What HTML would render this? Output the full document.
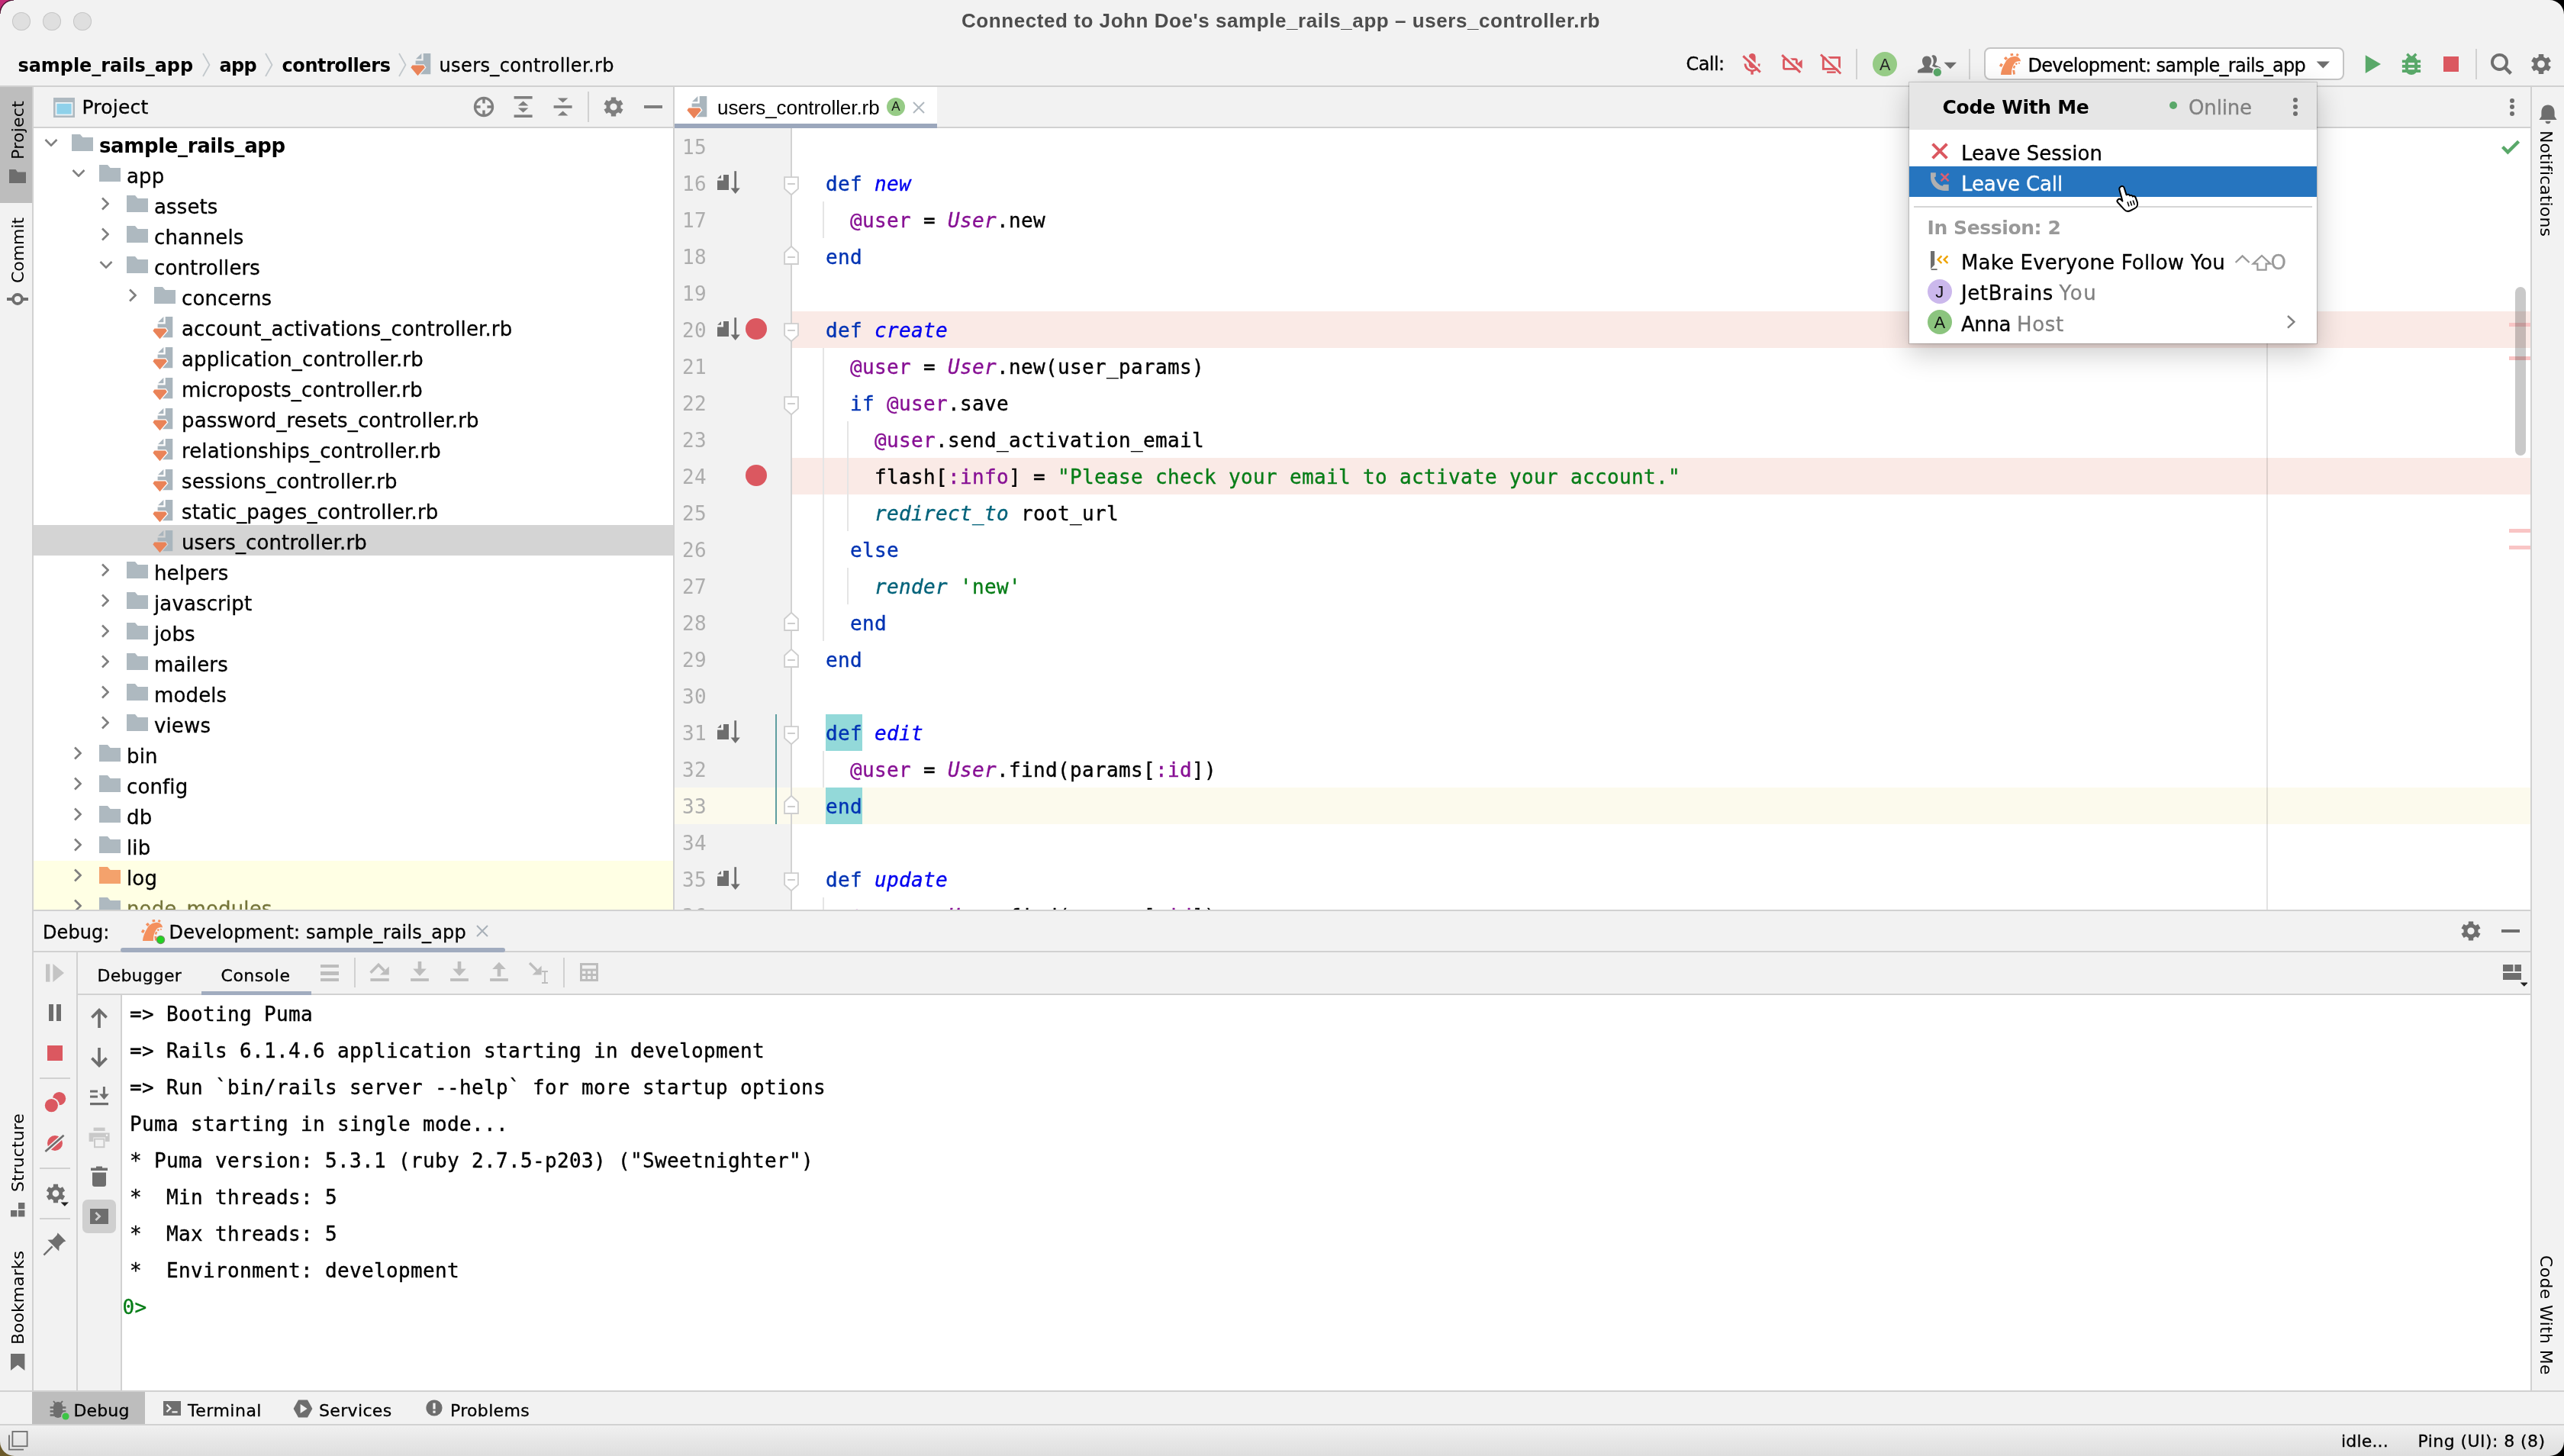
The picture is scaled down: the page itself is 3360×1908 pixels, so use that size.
<!DOCTYPE html>
<html><head><meta charset="utf-8"><title>users_controller.rb</title><style>
html,body{margin:0;padding:0;}
body{will-change:transform;width:3360px;height:1908px;position:relative;background:#f2f2f2;}
body div, body svg{position:absolute;}
.t{white-space:pre;}
.t span{position:static;}
</style></head><body>
<div style="left:0px;top:0px;width:3360px;height:112px;background:#f2f2f2;"></div>
<div style="left:0px;top:112px;width:3360px;height:2px;background:#d1d1d1;"></div>
<div style="left:0px;top:114px;width:42px;height:1710px;background:#f2f2f2;"></div>
<div style="left:42px;top:114px;width:2px;height:1708px;background:#d1d1d1;"></div>
<div style="left:3318px;top:114px;width:42px;height:1710px;background:#f2f2f2;"></div>
<div style="left:3316px;top:114px;width:2px;height:1708px;background:#d1d1d1;"></div>
<div style="left:44px;top:114px;width:838px;height:52px;background:#f2f2f2;"></div>
<div style="left:44px;top:166px;width:838px;height:2px;background:#d1d1d1;"></div>
<div style="left:44px;top:168px;width:838px;height:1024px;background:#fff;"></div>
<div style="left:882px;top:114px;width:2px;height:1078px;background:#d1d1d1;"></div>
<div style="left:884px;top:114px;width:2432px;height:52px;background:#f2f2f2;"></div>
<div style="left:884px;top:166px;width:2432px;height:2px;background:#d1d1d1;"></div>
<div style="left:884px;top:168px;width:152px;height:1024px;background:#f2f2f2;"></div>
<div style="left:1038px;top:168px;width:2278px;height:1024px;background:#fff;"></div>
<div style="left:44px;top:1192px;width:3272px;height:2px;background:#d1d1d1;"></div>
<div style="left:44px;top:1194px;width:3272px;height:52px;background:#f2f2f2;"></div>
<div style="left:44px;top:1246px;width:3272px;height:2px;background:#d1d1d1;"></div>
<div style="left:44px;top:1248px;width:56px;height:574px;background:#f2f2f2;"></div>
<div style="left:100px;top:1248px;width:2px;height:574px;background:#d1d1d1;"></div>
<div style="left:102px;top:1248px;width:3214px;height:54px;background:#f2f2f2;"></div>
<div style="left:102px;top:1302px;width:3214px;height:2px;background:#d1d1d1;"></div>
<div style="left:102px;top:1304px;width:56px;height:518px;background:#f2f2f2;"></div>
<div style="left:158px;top:1304px;width:2px;height:518px;background:#d1d1d1;"></div>
<div style="left:160px;top:1304px;width:3156px;height:518px;background:#fff;"></div>
<div style="left:0px;top:1822px;width:3360px;height:2px;background:#d1d1d1;"></div>
<div style="left:0px;top:1824px;width:3360px;height:42px;background:#f2f2f2;"></div>
<div style="left:0px;top:1866px;width:3360px;height:2px;background:#d1d1d1;"></div>
<div style="left:0px;top:1868px;width:3360px;height:40px;background:linear-gradient(#f0f0f0,#dedede);"></div>
<div style="left:16px;top:16px;width:24px;height:24px;border-radius:50%;background:#dfdfdf;box-shadow:inset 0 0 0 1px #c6c6c6;"></div>
<div style="left:56px;top:16px;width:24px;height:24px;border-radius:50%;background:#dfdfdf;box-shadow:inset 0 0 0 1px #c6c6c6;"></div>
<div style="left:96px;top:16px;width:24px;height:24px;border-radius:50%;background:#dfdfdf;box-shadow:inset 0 0 0 1px #c6c6c6;"></div>
<svg style="left:0;top:0" width="20" height="20"><path d="M0,0 H18 A18,18 0 0 0 0,18Z" fill="#c22a76"/><path d="M18,0 A18,18 0 0 0 0,18" fill="none" stroke="#4a0f2e" stroke-width="1.4"/></svg>
<svg style="left:3339px;top:0" width="21" height="21"><path d="M21,0 H2 A19,19 0 0 1 21,19Z" fill="#000"/></svg>
<svg style="left:0;top:1887px" width="21" height="21"><path d="M0,21 H19 A19,19 0 0 1 0,2Z" fill="#6b5a2a"/></svg>
<svg style="left:3339px;top:1887px" width="21" height="21"><path d="M21,21 H2 A19,19 0 0 0 21,2Z" fill="#000"/></svg>
<div class="t" style="left:1260px;top:8.99px;line-height:36px;font-size:26px;font-family:'Liberation Sans', sans-serif;color:#4d4d4d;font-weight:700;letter-spacing:0.56px;">Connected to John Doe's sample_rails_app – users_controller.rb</div>
<div class="t" style="left:23.5px;top:68.70px;line-height:34px;font-size:24px;font-family:'DejaVu Sans', 'Liberation Sans', sans-serif;color:#000;font-weight:700;letter-spacing:-0.06px;">sample_rails_app</div>
<div class="t" style="left:287.5px;top:68.70px;line-height:34px;font-size:24px;font-family:'DejaVu Sans', 'Liberation Sans', sans-serif;color:#000;font-weight:700;letter-spacing:-0.69px;">app</div>
<div class="t" style="left:369.5px;top:68.70px;line-height:34px;font-size:24px;font-family:'DejaVu Sans', 'Liberation Sans', sans-serif;color:#000;font-weight:700;letter-spacing:-0.40px;">controllers</div>
<div class="t" style="left:575.5px;top:68.70px;line-height:34px;font-size:24px;font-family:'DejaVu Sans', 'Liberation Sans', sans-serif;color:#000;-webkit-text-stroke:0.3px;letter-spacing:0.40px;">users_controller.rb</div>
<svg style="left:264.5px;top:69px;" width="12" height="32" viewBox="0 0 12 32"><path d="M1,1 L9.5,16 L1,31" fill="none" stroke="#c2c8cc" stroke-width="1.8"/></svg>
<svg style="left:347px;top:69px;" width="12" height="32" viewBox="0 0 12 32"><path d="M1,1 L9.5,16 L1,31" fill="none" stroke="#c2c8cc" stroke-width="1.8"/></svg>
<svg style="left:521.5px;top:69px;" width="12" height="32" viewBox="0 0 12 32"><path d="M1,1 L9.5,16 L1,31" fill="none" stroke="#c2c8cc" stroke-width="1.8"/></svg>
<svg style="left:538px;top:70px;" width="27" height="31" viewBox="0 0 27 31"><path d="M16.7,0 H26.3 V27.3 H6.6 V9.6 H16.7Z" fill="#a9b5bd"/><path d="M14.4,0 V7.3 H7Z" fill="#a9b5bd"/><path d="M2.4,15.6 H16.9 L18.9,18.5 L9.5,29.2 L0.4,18.5Z" fill="#ea8358" stroke="#f2f2f2" stroke-width="2.6" paint-order="stroke"/></svg>
<div class="t" style="left:2209.5px;top:66.70px;line-height:34px;font-size:24px;font-family:'DejaVu Sans', 'Liberation Sans', sans-serif;color:#000;-webkit-text-stroke:0.3px;letter-spacing:-0.58px;">Call:</div>
<svg style="left:2280px;top:68px;" width="32" height="32" viewBox="0 0 32 32"><rect x="11.8" y="2" width="8.8" height="19.4" rx="4.4" fill="#db5860"/><path d="M6.9,15.600 a9.200,9.200 0 0 0 18.400,0" fill="none" stroke="#db5860" stroke-width="2.8"/><path d="M16.05,24.200 V29.700" stroke="#db5860" stroke-width="3.4"/><path d="M6.5,3.2 L29.0,24.400000000000002" stroke="#f2f2f2" stroke-width="2.8"/><path d="M4.3,5.4 L26.8,26.6" stroke="#db5860" stroke-width="3.0"/></svg>
<svg style="left:2332px;top:68px;" width="32" height="32" viewBox="0 0 32 32"><rect x="5.5" y="9.6" width="16.9" height="12.8" rx="1.6" fill="none" stroke="#db5860" stroke-width="2.8"/><path d="M22.6,16 L29.700,10.100 V21.900Z" fill="#db5860"/><path d="M5.4,2.0 L29.4,24.7" stroke="#f2f2f2" stroke-width="2.8"/><path d="M3.2,4.2 L27.2,26.9" stroke="#db5860" stroke-width="3.0"/></svg>
<svg style="left:2384px;top:68px;" width="32" height="32" viewBox="0 0 32 32"><rect x="5.3" y="7.4" width="21.2" height="15" fill="none" stroke="#db5860" stroke-width="2.8"/><rect x="10.1" y="25.4" width="11.6" height="2.5" fill="#db5860"/><path d="M4.2,1.2999999999999998 L30.4,26.3" stroke="#f2f2f2" stroke-width="2.8"/><path d="M2,3.5 L28.2,28.5" stroke="#db5860" stroke-width="3.0"/></svg>
<div style="left:2432px;top:64px;width:2px;height:40px;background:#d1d1d1;"></div>
<div style="left:2454px;top:68px;width:32px;height:32px;border-radius:50%;background:#96cb86;"></div>
<div class="t" style="left:2463.1px;top:69.55px;line-height:30px;font-size:21.5px;font-family:'Liberation Sans', sans-serif;color:#262626;">A</div>
<svg style="left:2512px;top:70px;" width="36" height="32" viewBox="0 0 36 32"><path d="M13,3.5 c4.2,0 6,3 6,6.6 c0,2.6 -1,4.8 -2.4,6.2 v1.6 l6.4,3 c1.4,0.7 2,1.8 2,3.2 v1.4 H1 v-1.4 c0,-1.4 0.6,-2.5 2,-3.2 l6.4,-3 v-1.6 c-1.4,-1.4 -2.4,-3.6 -2.4,-6.2 c0,-3.6 1.8,-6.6 6,-6.6Z" fill="#6e6e6e"/><path d="M20.5,2 c4,0 5.6,2.8 5.6,6 c0,2.4 -0.9,4.4 -2.2,5.7 v1.3 l5.8,2.8 c1.2,0.6 1.8,1.6 1.8,2.9 v1.3 h-4.5 c-0.3,-1.6 -1.3,-2.7 -2.8,-3.4 l-4.4,-2 c1.3,-1.8 2,-4 2,-6.6 c0,-2.6 -0.8,-5 -2.6,-6.6 c0.5,-0.5 0.9,-0.7 1.3,-0.7Z" fill="#6e6e6e"/><circle cx="26.8" cy="24.7" r="6.6" fill="#f2f2f2"/><circle cx="26.8" cy="24.7" r="5.2" fill="#59a869"/></svg>
<svg style="left:2547px;top:81px;" width="18" height="10" viewBox="0 0 18 10"><path d="M0.5,0.8 H17 L8.75,9.2Z" fill="#6e6e6e"/></svg>
<div style="left:2580px;top:64px;width:2px;height:40px;background:#d1d1d1;"></div>
<div style="left:2600px;top:62px;width:468px;height:39px;background:#fff;border:2px solid #c4c4c4;border-radius:8px;"></div>
<svg style="left:2619px;top:70px;" width="30" height="29" viewBox="0 0 30 29"><g fill="#f4905e"><path d="M3,28.1 C3.4,22 5.4,17.5 10.2,9.2 C13,5.6 17,3.9 21.9,3.7 C25,3.8 27.5,6 28.8,8.7 V10.6 C27,10 24.5,10.3 22.6,11.3 C20.5,12.8 18.5,16.5 17.4,20.9 C17,23.500 16.9,26 16.9,28.1Z"/><rect x="1.70" y="13.30" width="3.4" height="4.2" transform="rotate(30 3.4 15.4)"/><rect x="7.70" y="4.60" width="3.6" height="3.8" transform="rotate(50 9.5 6.5)"/><rect x="15.60" y="0.10" width="3.6" height="3" transform="rotate(-12 17.4 1.6)"/><rect x="23.20" y="0.40" width="3" height="3" transform="rotate(25 24.7 1.9)"/><rect x="26.00" y="11.90" width="1.8" height="1.8" transform="rotate(20 26.9 12.8)"/><rect x="22.10" y="12.50" width="2.4" height="2.4" transform="rotate(35 23.3 13.7)"/><rect x="19.30" y="16.00" width="2.4" height="3.6" transform="rotate(20 20.5 17.8)"/><rect x="18.70" y="21.90" width="2.8" height="5.6" transform="rotate(-8 20.1 24.7)"/></g></svg>
<div class="t" style="left:2657.5px;top:68.70px;line-height:34px;font-size:24px;font-family:'DejaVu Sans', 'Liberation Sans', sans-serif;color:#000;-webkit-text-stroke:0.3px;letter-spacing:-0.71px;">Development: sample_rails_app</div>
<svg style="left:3035px;top:80px;" width="19" height="10" viewBox="0 0 19 10"><path d="M0.6,0.5 H18 L9.3,9.6Z" fill="#6e6e6e"/></svg>
<svg style="left:3098px;top:70px;" width="24" height="28" viewBox="0 0 24 28"><path d="M1.8,2.2 L22,14 L1.8,26Z" fill="#59a869"/></svg>
<svg style="left:3146px;top:68px;" width="28" height="32" viewBox="0 0 28 32"><g fill="#59a869"><path d="M6,13.5 a8,8 0 0 1 16,0 V22 a8,8 0 0 1 -16,0Z"/><rect x="1.9" y="10.6" width="24.2" height="3.6"/><rect x="1.9" y="16.9" width="24.2" height="3.9"/><rect x="1.9" y="23.2" width="24.2" height="3.8"/></g><path d="M8.3,2.700 L13.700,8.200 M20.300,2.700 L14.800,8.200" stroke="#59a869" stroke-width="3.4"/><rect x="9.9" y="14.2" width="8.2" height="2.7" fill="#f2f2f2"/><rect x="9.9" y="20.8" width="8.2" height="2.4" fill="#f2f2f2"/></svg>
<div style="left:3202px;top:74px;width:20px;height:20px;background:#db5860;"></div>
<div style="left:3244px;top:64px;width:2px;height:40px;background:#d1d1d1;"></div>
<svg style="left:3260px;top:68px;" width="34" height="32" viewBox="0 0 34 32"><circle cx="15.5" cy="13.4" r="9.6" fill="none" stroke="#6e6e6e" stroke-width="3.8"/><path d="M22.3,20.2 L30.4,28.4" stroke="#6e6e6e" stroke-width="4.4"/></svg>
<svg style="left:3314px;top:68px;" width="32" height="32" viewBox="0 0 32 32"><path d="M12.64,6.79 L12.75,3.00 L19.25,3.00 L19.36,6.79 L22.29,8.49 L25.63,6.69 L28.88,12.31 L25.65,14.31 L25.65,17.69 L28.88,19.69 L25.63,25.31 L22.29,23.51 L19.36,25.21 L19.25,29.00 L12.75,29.00 L12.64,25.21 L9.71,23.51 L6.37,25.31 L3.12,19.69 L6.35,17.69 L6.35,14.31 L3.12,12.31 L6.37,6.69 L9.71,8.49Z M11.20,16.00 a4.8,4.8 0 1,0 9.6,0 a4.8,4.8 0 1,0 -9.6,0Z" fill="#6e6e6e" fill-rule="evenodd"/></svg>
<div style="left:0px;top:114px;width:42px;height:152px;background:#bdbdbd;"></div>
<div class="t" style="left:24px;top:208.5px;transform-origin:0 0;transform:rotate(-90deg) translate(0,-50%);font-size:22px;line-height:28px;font-family:'DejaVu Sans', 'Liberation Sans', sans-serif;color:#000;letter-spacing:0.25px;">Project</div>
<div class="t" style="left:24px;top:371px;transform-origin:0 0;transform:rotate(-90deg) translate(0,-50%);font-size:22px;line-height:28px;font-family:'DejaVu Sans', 'Liberation Sans', sans-serif;color:#000;letter-spacing:-0.07px;">Commit</div>
<div class="t" style="left:24px;top:1562px;transform-origin:0 0;transform:rotate(-90deg) translate(0,-50%);font-size:22px;line-height:28px;font-family:'DejaVu Sans', 'Liberation Sans', sans-serif;color:#000;letter-spacing:0.07px;">Structure</div>
<div class="t" style="left:24px;top:1762px;transform-origin:0 0;transform:rotate(-90deg) translate(0,-50%);font-size:22px;line-height:28px;font-family:'DejaVu Sans', 'Liberation Sans', sans-serif;color:#000;letter-spacing:0.01px;">Bookmarks</div>
<svg style="left:12px;top:222px;" width="22" height="18" viewBox="0 0 22 18"><path d="M0,0 H8.5 L11,3.4 H22 V18 H0Z" fill="#6e6e6e"/></svg>
<svg style="left:9px;top:378px;" width="28" height="28" viewBox="0 0 28 28"><circle cx="14" cy="14" r="6" fill="none" stroke="#6e6e6e" stroke-width="3.8"/><path d="M0,14 H7 M21,14 H28" stroke="#6e6e6e" stroke-width="3.8"/></svg>
<svg style="left:14px;top:1576px;" width="20" height="20" viewBox="0 0 20 20"><rect x="0" y="10" width="8.4" height="8.4" fill="#6e6e6e"/><rect x="10" y="10" width="8.4" height="8.4" fill="#6e6e6e"/><rect x="10" y="0" width="8.4" height="8.4" fill="#6e6e6e"/></svg>
<svg style="left:14px;top:1774px;" width="20" height="24" viewBox="0 0 20 24"><path d="M0,0 H18.4 V22 L9.2,14.8 L0,22Z" fill="#6e6e6e"/></svg>
<svg style="left:70px;top:128px;" width="28" height="26" viewBox="0 0 28 26"><rect x="0" y="0" width="28" height="26" fill="#aeb9c0"/><rect x="2.6" y="6" width="22.8" height="17.4" fill="#eef3f6"/><rect x="4.4" y="7.8" width="19.2" height="13.8" fill="#8fd1ea"/></svg>
<div class="t" style="left:107.5px;top:123.35px;line-height:35px;font-size:25px;font-family:'DejaVu Sans', 'Liberation Sans', sans-serif;color:#000;-webkit-text-stroke:0.3px;letter-spacing:0.21px;">Project</div>
<svg style="left:620px;top:126px;" width="28" height="28" viewBox="0 0 28 28"><circle cx="14" cy="14" r="11.6" fill="none" stroke="#7f7f7f" stroke-width="3.2"/><path d="M14,2 V9.6 M14,18.4 V26 M2,14 H9.6 M18.4,14 H26" stroke="#7f7f7f" stroke-width="3.4"/></svg>
<svg style="left:673px;top:126px;" width="26" height="28" viewBox="0 0 26 28"><rect x="0.6" y="0" width="24" height="3.6" fill="#7f7f7f"/><rect x="0.6" y="24.4" width="24" height="3.6" fill="#7f7f7f"/><path d="M12.6,6.6 L19.4,12.6 H5.8Z M12.6,21.4 L19.4,15.6 H5.8Z" fill="#7f7f7f"/></svg>
<svg style="left:725px;top:126px;" width="26" height="28" viewBox="0 0 26 28"><rect x="0.6" y="12.2" width="24" height="3.6" fill="#7f7f7f"/><path d="M12.6,8.6 L19.4,2.4 H5.8Z M12.6,19.4 L19.4,25.6 H5.8Z" fill="#7f7f7f"/></svg>
<div style="left:770px;top:120px;width:2px;height:40px;background:#d1d1d1;"></div>
<svg style="left:790px;top:126px;" width="28" height="28" viewBox="0 0 28 28"><path d="M10.71,4.98 L10.85,1.39 L17.15,1.39 L17.29,4.98 L20.16,6.64 L23.35,4.96 L26.50,10.42 L23.46,12.34 L23.46,15.66 L26.50,17.58 L23.35,23.04 L20.16,21.36 L17.29,23.02 L17.15,26.61 L10.85,26.61 L10.71,23.02 L7.84,21.36 L4.65,23.04 L1.50,17.58 L4.54,15.66 L4.54,12.34 L1.50,10.42 L4.65,4.96 L7.84,6.64Z M9.40,14.00 a4.6,4.6 0 1,0 9.2,0 a4.6,4.6 0 1,0 -9.2,0Z" fill="#7f7f7f" fill-rule="evenodd"/></svg>
<div style="left:844px;top:138px;width:24px;height:4px;background:#7f7f7f;"></div>
<div style="left:44px;top:168px;width:838px;height:1024px;overflow:hidden;">
<div style="left:0px;top:520px;width:838px;height:40px;background:#d4d4d4;"></div>
<div style="left:0px;top:960px;width:838px;height:80px;background:#ffffe4;"></div>
<svg style="left:14px;top:14px;" width="18" height="10" viewBox="0 0 18 10"><path d="M1.5,1 L9,8.6 L16.5,1" fill="none" stroke="#7f7f7f" stroke-width="2.6"/></svg>
<svg style="left:50px;top:8px;" width="28" height="22" viewBox="0 0 28 22"><path d="M0,0 H11 L14.5,4 H28 V22 H0Z" fill="#aeb9c0"/></svg>
<div class="t" style="left:86px;top:5.00px;line-height:36px;font-size:26px;font-family:'DejaVu Sans', 'Liberation Sans', sans-serif;color:#000;font-weight:700;letter-spacing:-0.37px;">sample_rails_app</div>
<svg style="left:50px;top:54px;" width="18" height="10" viewBox="0 0 18 10"><path d="M1.5,1 L9,8.6 L16.5,1" fill="none" stroke="#7f7f7f" stroke-width="2.6"/></svg>
<svg style="left:86px;top:48px;" width="28" height="22" viewBox="0 0 28 22"><path d="M0,0 H11 L14.5,4 H28 V22 H0Z" fill="#aeb9c0"/></svg>
<div class="t" style="left:122px;top:44.80px;line-height:36px;font-size:26px;font-family:'DejaVu Sans', 'Liberation Sans', sans-serif;color:#000;letter-spacing:0.13px;-webkit-text-stroke:0.3px;">app</div>
<svg style="left:89px;top:90px;" width="10" height="18" viewBox="0 0 10 18"><path d="M1,1.5 L8.6,9 L1,16.5" fill="none" stroke="#7f7f7f" stroke-width="2.6"/></svg>
<svg style="left:122px;top:88px;" width="28" height="22" viewBox="0 0 28 22"><path d="M0,0 H11 L14.5,4 H28 V22 H0Z" fill="#aeb9c0"/></svg>
<div class="t" style="left:158px;top:84.80px;line-height:36px;font-size:26px;font-family:'DejaVu Sans', 'Liberation Sans', sans-serif;color:#000;letter-spacing:0.13px;-webkit-text-stroke:0.3px;">assets</div>
<svg style="left:89px;top:130px;" width="10" height="18" viewBox="0 0 10 18"><path d="M1,1.5 L8.6,9 L1,16.5" fill="none" stroke="#7f7f7f" stroke-width="2.6"/></svg>
<svg style="left:122px;top:128px;" width="28" height="22" viewBox="0 0 28 22"><path d="M0,0 H11 L14.5,4 H28 V22 H0Z" fill="#aeb9c0"/></svg>
<div class="t" style="left:158px;top:124.80px;line-height:36px;font-size:26px;font-family:'DejaVu Sans', 'Liberation Sans', sans-serif;color:#000;letter-spacing:0.13px;-webkit-text-stroke:0.3px;">channels</div>
<svg style="left:86px;top:174px;" width="18" height="10" viewBox="0 0 18 10"><path d="M1.5,1 L9,8.6 L16.5,1" fill="none" stroke="#7f7f7f" stroke-width="2.6"/></svg>
<svg style="left:122px;top:168px;" width="28" height="22" viewBox="0 0 28 22"><path d="M0,0 H11 L14.5,4 H28 V22 H0Z" fill="#aeb9c0"/></svg>
<div class="t" style="left:158px;top:164.80px;line-height:36px;font-size:26px;font-family:'DejaVu Sans', 'Liberation Sans', sans-serif;color:#000;letter-spacing:0.13px;-webkit-text-stroke:0.3px;">controllers</div>
<svg style="left:125px;top:210px;" width="10" height="18" viewBox="0 0 10 18"><path d="M1,1.5 L8.6,9 L1,16.5" fill="none" stroke="#7f7f7f" stroke-width="2.6"/></svg>
<svg style="left:158px;top:208px;" width="28" height="22" viewBox="0 0 28 22"><path d="M0,0 H11 L14.5,4 H28 V22 H0Z" fill="#aeb9c0"/></svg>
<div class="t" style="left:194px;top:204.80px;line-height:36px;font-size:26px;font-family:'DejaVu Sans', 'Liberation Sans', sans-serif;color:#000;letter-spacing:0.13px;-webkit-text-stroke:0.3px;">concerns</div>
<svg style="left:155.5px;top:246.5px;" width="27" height="31" viewBox="0 0 27 31"><path d="M16.7,0 H26.3 V27.3 H6.6 V9.6 H16.7Z" fill="#a9b5bd"/><path d="M14.4,0 V7.3 H7Z" fill="#a9b5bd"/><path d="M2.4,15.6 H16.9 L18.9,18.5 L9.5,29.2 L0.4,18.5Z" fill="#ea8358" stroke="#fff" stroke-width="2.6" paint-order="stroke"/></svg>
<div class="t" style="left:194px;top:244.80px;line-height:36px;font-size:26px;font-family:'DejaVu Sans', 'Liberation Sans', sans-serif;color:#000;letter-spacing:0.13px;-webkit-text-stroke:0.3px;">account_activations_controller.rb</div>
<svg style="left:155.5px;top:286.5px;" width="27" height="31" viewBox="0 0 27 31"><path d="M16.7,0 H26.3 V27.3 H6.6 V9.6 H16.7Z" fill="#a9b5bd"/><path d="M14.4,0 V7.3 H7Z" fill="#a9b5bd"/><path d="M2.4,15.6 H16.9 L18.9,18.5 L9.5,29.2 L0.4,18.5Z" fill="#ea8358" stroke="#fff" stroke-width="2.6" paint-order="stroke"/></svg>
<div class="t" style="left:194px;top:284.80px;line-height:36px;font-size:26px;font-family:'DejaVu Sans', 'Liberation Sans', sans-serif;color:#000;letter-spacing:0.13px;-webkit-text-stroke:0.3px;">application_controller.rb</div>
<svg style="left:155.5px;top:326.5px;" width="27" height="31" viewBox="0 0 27 31"><path d="M16.7,0 H26.3 V27.3 H6.6 V9.6 H16.7Z" fill="#a9b5bd"/><path d="M14.4,0 V7.3 H7Z" fill="#a9b5bd"/><path d="M2.4,15.6 H16.9 L18.9,18.5 L9.5,29.2 L0.4,18.5Z" fill="#ea8358" stroke="#fff" stroke-width="2.6" paint-order="stroke"/></svg>
<div class="t" style="left:194px;top:324.80px;line-height:36px;font-size:26px;font-family:'DejaVu Sans', 'Liberation Sans', sans-serif;color:#000;letter-spacing:0.13px;-webkit-text-stroke:0.3px;">microposts_controller.rb</div>
<svg style="left:155.5px;top:366.5px;" width="27" height="31" viewBox="0 0 27 31"><path d="M16.7,0 H26.3 V27.3 H6.6 V9.6 H16.7Z" fill="#a9b5bd"/><path d="M14.4,0 V7.3 H7Z" fill="#a9b5bd"/><path d="M2.4,15.6 H16.9 L18.9,18.5 L9.5,29.2 L0.4,18.5Z" fill="#ea8358" stroke="#fff" stroke-width="2.6" paint-order="stroke"/></svg>
<div class="t" style="left:194px;top:364.80px;line-height:36px;font-size:26px;font-family:'DejaVu Sans', 'Liberation Sans', sans-serif;color:#000;letter-spacing:0.13px;-webkit-text-stroke:0.3px;">password_resets_controller.rb</div>
<svg style="left:155.5px;top:406.5px;" width="27" height="31" viewBox="0 0 27 31"><path d="M16.7,0 H26.3 V27.3 H6.6 V9.6 H16.7Z" fill="#a9b5bd"/><path d="M14.4,0 V7.3 H7Z" fill="#a9b5bd"/><path d="M2.4,15.6 H16.9 L18.9,18.5 L9.5,29.2 L0.4,18.5Z" fill="#ea8358" stroke="#fff" stroke-width="2.6" paint-order="stroke"/></svg>
<div class="t" style="left:194px;top:404.80px;line-height:36px;font-size:26px;font-family:'DejaVu Sans', 'Liberation Sans', sans-serif;color:#000;letter-spacing:0.13px;-webkit-text-stroke:0.3px;">relationships_controller.rb</div>
<svg style="left:155.5px;top:446.5px;" width="27" height="31" viewBox="0 0 27 31"><path d="M16.7,0 H26.3 V27.3 H6.6 V9.6 H16.7Z" fill="#a9b5bd"/><path d="M14.4,0 V7.3 H7Z" fill="#a9b5bd"/><path d="M2.4,15.6 H16.9 L18.9,18.5 L9.5,29.2 L0.4,18.5Z" fill="#ea8358" stroke="#fff" stroke-width="2.6" paint-order="stroke"/></svg>
<div class="t" style="left:194px;top:444.80px;line-height:36px;font-size:26px;font-family:'DejaVu Sans', 'Liberation Sans', sans-serif;color:#000;letter-spacing:0.13px;-webkit-text-stroke:0.3px;">sessions_controller.rb</div>
<svg style="left:155.5px;top:486.5px;" width="27" height="31" viewBox="0 0 27 31"><path d="M16.7,0 H26.3 V27.3 H6.6 V9.6 H16.7Z" fill="#a9b5bd"/><path d="M14.4,0 V7.3 H7Z" fill="#a9b5bd"/><path d="M2.4,15.6 H16.9 L18.9,18.5 L9.5,29.2 L0.4,18.5Z" fill="#ea8358" stroke="#fff" stroke-width="2.6" paint-order="stroke"/></svg>
<div class="t" style="left:194px;top:484.80px;line-height:36px;font-size:26px;font-family:'DejaVu Sans', 'Liberation Sans', sans-serif;color:#000;letter-spacing:0.13px;-webkit-text-stroke:0.3px;">static_pages_controller.rb</div>
<svg style="left:155.5px;top:526.5px;" width="27" height="31" viewBox="0 0 27 31"><path d="M16.7,0 H26.3 V27.3 H6.6 V9.6 H16.7Z" fill="#a9b5bd"/><path d="M14.4,0 V7.3 H7Z" fill="#a9b5bd"/><path d="M2.4,15.6 H16.9 L18.9,18.5 L9.5,29.2 L0.4,18.5Z" fill="#ea8358" stroke="#d4d4d4" stroke-width="2.6" paint-order="stroke"/></svg>
<div class="t" style="left:194px;top:524.80px;line-height:36px;font-size:26px;font-family:'DejaVu Sans', 'Liberation Sans', sans-serif;color:#000;letter-spacing:0.13px;-webkit-text-stroke:0.3px;">users_controller.rb</div>
<svg style="left:89px;top:570px;" width="10" height="18" viewBox="0 0 10 18"><path d="M1,1.5 L8.6,9 L1,16.5" fill="none" stroke="#7f7f7f" stroke-width="2.6"/></svg>
<svg style="left:122px;top:568px;" width="28" height="22" viewBox="0 0 28 22"><path d="M0,0 H11 L14.5,4 H28 V22 H0Z" fill="#aeb9c0"/></svg>
<div class="t" style="left:158px;top:564.80px;line-height:36px;font-size:26px;font-family:'DejaVu Sans', 'Liberation Sans', sans-serif;color:#000;letter-spacing:0.13px;-webkit-text-stroke:0.3px;">helpers</div>
<svg style="left:89px;top:610px;" width="10" height="18" viewBox="0 0 10 18"><path d="M1,1.5 L8.6,9 L1,16.5" fill="none" stroke="#7f7f7f" stroke-width="2.6"/></svg>
<svg style="left:122px;top:608px;" width="28" height="22" viewBox="0 0 28 22"><path d="M0,0 H11 L14.5,4 H28 V22 H0Z" fill="#aeb9c0"/></svg>
<div class="t" style="left:158px;top:604.80px;line-height:36px;font-size:26px;font-family:'DejaVu Sans', 'Liberation Sans', sans-serif;color:#000;letter-spacing:0.13px;-webkit-text-stroke:0.3px;">javascript</div>
<svg style="left:89px;top:650px;" width="10" height="18" viewBox="0 0 10 18"><path d="M1,1.5 L8.6,9 L1,16.5" fill="none" stroke="#7f7f7f" stroke-width="2.6"/></svg>
<svg style="left:122px;top:648px;" width="28" height="22" viewBox="0 0 28 22"><path d="M0,0 H11 L14.5,4 H28 V22 H0Z" fill="#aeb9c0"/></svg>
<div class="t" style="left:158px;top:644.80px;line-height:36px;font-size:26px;font-family:'DejaVu Sans', 'Liberation Sans', sans-serif;color:#000;letter-spacing:0.13px;-webkit-text-stroke:0.3px;">jobs</div>
<svg style="left:89px;top:690px;" width="10" height="18" viewBox="0 0 10 18"><path d="M1,1.5 L8.6,9 L1,16.5" fill="none" stroke="#7f7f7f" stroke-width="2.6"/></svg>
<svg style="left:122px;top:688px;" width="28" height="22" viewBox="0 0 28 22"><path d="M0,0 H11 L14.5,4 H28 V22 H0Z" fill="#aeb9c0"/></svg>
<div class="t" style="left:158px;top:684.80px;line-height:36px;font-size:26px;font-family:'DejaVu Sans', 'Liberation Sans', sans-serif;color:#000;letter-spacing:0.13px;-webkit-text-stroke:0.3px;">mailers</div>
<svg style="left:89px;top:730px;" width="10" height="18" viewBox="0 0 10 18"><path d="M1,1.5 L8.6,9 L1,16.5" fill="none" stroke="#7f7f7f" stroke-width="2.6"/></svg>
<svg style="left:122px;top:728px;" width="28" height="22" viewBox="0 0 28 22"><path d="M0,0 H11 L14.5,4 H28 V22 H0Z" fill="#aeb9c0"/></svg>
<div class="t" style="left:158px;top:724.80px;line-height:36px;font-size:26px;font-family:'DejaVu Sans', 'Liberation Sans', sans-serif;color:#000;letter-spacing:0.13px;-webkit-text-stroke:0.3px;">models</div>
<svg style="left:89px;top:770px;" width="10" height="18" viewBox="0 0 10 18"><path d="M1,1.5 L8.6,9 L1,16.5" fill="none" stroke="#7f7f7f" stroke-width="2.6"/></svg>
<svg style="left:122px;top:768px;" width="28" height="22" viewBox="0 0 28 22"><path d="M0,0 H11 L14.5,4 H28 V22 H0Z" fill="#aeb9c0"/></svg>
<div class="t" style="left:158px;top:764.80px;line-height:36px;font-size:26px;font-family:'DejaVu Sans', 'Liberation Sans', sans-serif;color:#000;letter-spacing:0.13px;-webkit-text-stroke:0.3px;">views</div>
<svg style="left:53px;top:810px;" width="10" height="18" viewBox="0 0 10 18"><path d="M1,1.5 L8.6,9 L1,16.5" fill="none" stroke="#7f7f7f" stroke-width="2.6"/></svg>
<svg style="left:86px;top:808px;" width="28" height="22" viewBox="0 0 28 22"><path d="M0,0 H11 L14.5,4 H28 V22 H0Z" fill="#aeb9c0"/></svg>
<div class="t" style="left:122px;top:804.80px;line-height:36px;font-size:26px;font-family:'DejaVu Sans', 'Liberation Sans', sans-serif;color:#000;letter-spacing:0.13px;-webkit-text-stroke:0.3px;">bin</div>
<svg style="left:53px;top:850px;" width="10" height="18" viewBox="0 0 10 18"><path d="M1,1.5 L8.6,9 L1,16.5" fill="none" stroke="#7f7f7f" stroke-width="2.6"/></svg>
<svg style="left:86px;top:848px;" width="28" height="22" viewBox="0 0 28 22"><path d="M0,0 H11 L14.5,4 H28 V22 H0Z" fill="#aeb9c0"/></svg>
<div class="t" style="left:122px;top:844.80px;line-height:36px;font-size:26px;font-family:'DejaVu Sans', 'Liberation Sans', sans-serif;color:#000;letter-spacing:0.13px;-webkit-text-stroke:0.3px;">config</div>
<svg style="left:53px;top:890px;" width="10" height="18" viewBox="0 0 10 18"><path d="M1,1.5 L8.6,9 L1,16.5" fill="none" stroke="#7f7f7f" stroke-width="2.6"/></svg>
<svg style="left:86px;top:888px;" width="28" height="22" viewBox="0 0 28 22"><path d="M0,0 H11 L14.5,4 H28 V22 H0Z" fill="#aeb9c0"/></svg>
<div class="t" style="left:122px;top:884.80px;line-height:36px;font-size:26px;font-family:'DejaVu Sans', 'Liberation Sans', sans-serif;color:#000;letter-spacing:0.13px;-webkit-text-stroke:0.3px;">db</div>
<svg style="left:53px;top:930px;" width="10" height="18" viewBox="0 0 10 18"><path d="M1,1.5 L8.6,9 L1,16.5" fill="none" stroke="#7f7f7f" stroke-width="2.6"/></svg>
<svg style="left:86px;top:928px;" width="28" height="22" viewBox="0 0 28 22"><path d="M0,0 H11 L14.5,4 H28 V22 H0Z" fill="#aeb9c0"/></svg>
<div class="t" style="left:122px;top:924.80px;line-height:36px;font-size:26px;font-family:'DejaVu Sans', 'Liberation Sans', sans-serif;color:#000;letter-spacing:0.13px;-webkit-text-stroke:0.3px;">lib</div>
<svg style="left:53px;top:970px;" width="10" height="18" viewBox="0 0 10 18"><path d="M1,1.5 L8.6,9 L1,16.5" fill="none" stroke="#7f7f7f" stroke-width="2.6"/></svg>
<svg style="left:86px;top:968px;" width="28" height="22" viewBox="0 0 28 22"><path d="M0,0 H11 L14.5,4 H28 V22 H0Z" fill="#f4a26c"/></svg>
<div class="t" style="left:122px;top:964.80px;line-height:36px;font-size:26px;font-family:'DejaVu Sans', 'Liberation Sans', sans-serif;color:#000;letter-spacing:0.13px;-webkit-text-stroke:0.3px;">log</div>
<svg style="left:53px;top:1010px;" width="10" height="18" viewBox="0 0 10 18"><path d="M1,1.5 L8.6,9 L1,16.5" fill="none" stroke="#7f7f7f" stroke-width="2.6"/></svg>
<svg style="left:86px;top:1008px;" width="28" height="22" viewBox="0 0 28 22"><path d="M0,0 H11 L14.5,4 H28 V22 H0Z" fill="#aeb9c0"/></svg>
<div class="t" style="left:122px;top:1004.80px;line-height:36px;font-size:26px;font-family:'DejaVu Sans', 'Liberation Sans', sans-serif;color:#75753a;letter-spacing:0.13px;-webkit-text-stroke:0.3px;">node_modules</div>
</div>
<div style="left:884px;top:114px;width:344px;height:52px;background:#fff;"></div>
<div style="left:884px;top:162px;width:344px;height:6px;background:#9ba7bc;"></div>
<svg style="left:899.5px;top:126px;" width="27" height="31" viewBox="0 0 27 31"><path d="M16.7,0 H26.3 V27.3 H6.6 V9.6 H16.7Z" fill="#a9b5bd"/><path d="M14.4,0 V7.3 H7Z" fill="#a9b5bd"/><path d="M2.4,15.6 H16.9 L18.9,18.5 L9.5,29.2 L0.4,18.5Z" fill="#ea8358" stroke="#fff" stroke-width="2.6" paint-order="stroke"/></svg>
<div class="t" style="left:940px;top:122.99px;line-height:36px;font-size:26px;font-family:'Liberation Sans', sans-serif;color:#000;letter-spacing:-0.07px;">users_controller.rb</div>
<div style="left:1162px;top:128px;width:24px;height:24px;border-radius:50%;background:#96cb86;"></div>
<div class="t" style="left:1168.3px;top:128.31px;line-height:24px;font-size:17px;font-family:'Liberation Sans', sans-serif;color:#111;">A</div>
<svg style="left:1196px;top:133px;" width="16" height="16" viewBox="0 0 16 16"><path d="M1,1 L15,15 M15,1 L1,15" stroke="#b0b8bf" stroke-width="2"/></svg>
<div style="left:3289px;top:128.5px;width:6px;height:6px;border-radius:50%;background:#6e6e6e;"></div>
<div style="left:3289px;top:137px;width:6px;height:6px;border-radius:50%;background:#6e6e6e;"></div>
<div style="left:3289px;top:145.6px;width:6px;height:6px;border-radius:50%;background:#6e6e6e;"></div>
<div style="left:884px;top:168px;width:2432px;height:1024px;overflow:hidden;">
<div style="left:152px;top:0px;width:2px;height:1024px;background:#d2d2d2;"></div>
<div style="left:154px;top:240px;width:2278px;height:48px;background:#faeae6;"></div>
<div style="left:154px;top:432px;width:2278px;height:48px;background:#faeae6;"></div>
<div style="left:0px;top:864px;width:2432px;height:48px;background:#fcfaed;"></div>
<div style="left:152px;top:864px;width:2px;height:48px;background:#d2d2d2;"></div>
<div style="left:2086px;top:0px;width:2px;height:1024px;background:rgba(0,0,0,0.11);"></div>
<div style="left:198px;top:768px;width:48px;height:48px;background:#93d9d9;"></div>
<div style="left:198px;top:864px;width:48px;height:48px;background:#93d9d9;"></div>
<div style="left:132px;top:768px;width:2px;height:144px;background:#5f9ea0;"></div>
<div style="left:194px;top:96px;width:2px;height:48px;background:#e5e5e5;"></div>
<div style="left:194px;top:288px;width:2px;height:384px;background:#e5e5e5;"></div>
<div style="left:194px;top:816px;width:2px;height:48px;background:#e5e5e5;"></div>
<div style="left:194px;top:1008px;width:2px;height:48px;background:#e5e5e5;"></div>
<div style="left:226px;top:384px;width:2px;height:144px;background:#e5e5e5;"></div>
<div style="left:226px;top:576px;width:2px;height:48px;background:#e5e5e5;"></div>
<div class="t" style="left:10px;top:6.50px;line-height:36px;font-size:26px;font-family:'DejaVu Sans Mono', 'Liberation Mono', monospace;color:#adadad;letter-spacing:0.347px;">15</div>
<div class="t" style="left:10px;top:54.50px;line-height:36px;font-size:26px;font-family:'DejaVu Sans Mono', 'Liberation Mono', monospace;color:#adadad;letter-spacing:0.347px;">16</div>
<div class="t" style="left:198px;top:54.50px;line-height:36px;font-size:26px;font-family:'DejaVu Sans Mono', 'Liberation Mono', monospace;color:#0033b3;letter-spacing:0.347px;-webkit-text-stroke:0.35px;">def</div>
<div class="t" style="left:262px;top:54.50px;line-height:36px;font-size:26px;font-family:'DejaVu Sans Mono', 'Liberation Mono', monospace;color:#0000f0;font-style:italic;letter-spacing:0.347px;-webkit-text-stroke:0.35px;">new</div>
<div class="t" style="left:10px;top:102.50px;line-height:36px;font-size:26px;font-family:'DejaVu Sans Mono', 'Liberation Mono', monospace;color:#adadad;letter-spacing:0.347px;">17</div>
<div class="t" style="left:230px;top:102.50px;line-height:36px;font-size:26px;font-family:'DejaVu Sans Mono', 'Liberation Mono', monospace;color:#871094;letter-spacing:0.347px;-webkit-text-stroke:0.35px;">@user</div>
<div class="t" style="left:326px;top:102.50px;line-height:36px;font-size:26px;font-family:'DejaVu Sans Mono', 'Liberation Mono', monospace;color:#000;letter-spacing:0.347px;-webkit-text-stroke:0.35px;">=</div>
<div class="t" style="left:358px;top:102.50px;line-height:36px;font-size:26px;font-family:'DejaVu Sans Mono', 'Liberation Mono', monospace;color:#871094;font-style:italic;letter-spacing:0.347px;-webkit-text-stroke:0.35px;">User</div>
<div class="t" style="left:422px;top:102.50px;line-height:36px;font-size:26px;font-family:'DejaVu Sans Mono', 'Liberation Mono', monospace;color:#000;letter-spacing:0.347px;-webkit-text-stroke:0.35px;">.new</div>
<div class="t" style="left:10px;top:150.50px;line-height:36px;font-size:26px;font-family:'DejaVu Sans Mono', 'Liberation Mono', monospace;color:#adadad;letter-spacing:0.347px;">18</div>
<div class="t" style="left:198px;top:150.50px;line-height:36px;font-size:26px;font-family:'DejaVu Sans Mono', 'Liberation Mono', monospace;color:#0033b3;letter-spacing:0.347px;-webkit-text-stroke:0.35px;">end</div>
<div class="t" style="left:10px;top:198.50px;line-height:36px;font-size:26px;font-family:'DejaVu Sans Mono', 'Liberation Mono', monospace;color:#adadad;letter-spacing:0.347px;">19</div>
<div class="t" style="left:10px;top:246.50px;line-height:36px;font-size:26px;font-family:'DejaVu Sans Mono', 'Liberation Mono', monospace;color:#adadad;letter-spacing:0.347px;">20</div>
<div class="t" style="left:198px;top:246.50px;line-height:36px;font-size:26px;font-family:'DejaVu Sans Mono', 'Liberation Mono', monospace;color:#0033b3;letter-spacing:0.347px;-webkit-text-stroke:0.35px;">def</div>
<div class="t" style="left:262px;top:246.50px;line-height:36px;font-size:26px;font-family:'DejaVu Sans Mono', 'Liberation Mono', monospace;color:#0000f0;font-style:italic;letter-spacing:0.347px;-webkit-text-stroke:0.35px;">create</div>
<div class="t" style="left:10px;top:294.50px;line-height:36px;font-size:26px;font-family:'DejaVu Sans Mono', 'Liberation Mono', monospace;color:#adadad;letter-spacing:0.347px;">21</div>
<div class="t" style="left:230px;top:294.50px;line-height:36px;font-size:26px;font-family:'DejaVu Sans Mono', 'Liberation Mono', monospace;color:#871094;letter-spacing:0.347px;-webkit-text-stroke:0.35px;">@user</div>
<div class="t" style="left:326px;top:294.50px;line-height:36px;font-size:26px;font-family:'DejaVu Sans Mono', 'Liberation Mono', monospace;color:#000;letter-spacing:0.347px;-webkit-text-stroke:0.35px;">=</div>
<div class="t" style="left:358px;top:294.50px;line-height:36px;font-size:26px;font-family:'DejaVu Sans Mono', 'Liberation Mono', monospace;color:#871094;font-style:italic;letter-spacing:0.347px;-webkit-text-stroke:0.35px;">User</div>
<div class="t" style="left:422px;top:294.50px;line-height:36px;font-size:26px;font-family:'DejaVu Sans Mono', 'Liberation Mono', monospace;color:#000;letter-spacing:0.347px;-webkit-text-stroke:0.35px;">.new(user_params)</div>
<div class="t" style="left:10px;top:342.50px;line-height:36px;font-size:26px;font-family:'DejaVu Sans Mono', 'Liberation Mono', monospace;color:#adadad;letter-spacing:0.347px;">22</div>
<div class="t" style="left:230px;top:342.50px;line-height:36px;font-size:26px;font-family:'DejaVu Sans Mono', 'Liberation Mono', monospace;color:#0033b3;letter-spacing:0.347px;-webkit-text-stroke:0.35px;">if</div>
<div class="t" style="left:278px;top:342.50px;line-height:36px;font-size:26px;font-family:'DejaVu Sans Mono', 'Liberation Mono', monospace;color:#871094;letter-spacing:0.347px;-webkit-text-stroke:0.35px;">@user</div>
<div class="t" style="left:358px;top:342.50px;line-height:36px;font-size:26px;font-family:'DejaVu Sans Mono', 'Liberation Mono', monospace;color:#000;letter-spacing:0.347px;-webkit-text-stroke:0.35px;">.save</div>
<div class="t" style="left:10px;top:390.50px;line-height:36px;font-size:26px;font-family:'DejaVu Sans Mono', 'Liberation Mono', monospace;color:#adadad;letter-spacing:0.347px;">23</div>
<div class="t" style="left:262px;top:390.50px;line-height:36px;font-size:26px;font-family:'DejaVu Sans Mono', 'Liberation Mono', monospace;color:#871094;letter-spacing:0.347px;-webkit-text-stroke:0.35px;">@user</div>
<div class="t" style="left:342px;top:390.50px;line-height:36px;font-size:26px;font-family:'DejaVu Sans Mono', 'Liberation Mono', monospace;color:#000;letter-spacing:0.347px;-webkit-text-stroke:0.35px;">.send_activation_email</div>
<div class="t" style="left:10px;top:438.50px;line-height:36px;font-size:26px;font-family:'DejaVu Sans Mono', 'Liberation Mono', monospace;color:#adadad;letter-spacing:0.347px;">24</div>
<div class="t" style="left:262px;top:438.50px;line-height:36px;font-size:26px;font-family:'DejaVu Sans Mono', 'Liberation Mono', monospace;color:#000;letter-spacing:0.347px;-webkit-text-stroke:0.35px;">flash[</div>
<div class="t" style="left:358px;top:438.50px;line-height:36px;font-size:26px;font-family:'DejaVu Sans Mono', 'Liberation Mono', monospace;color:#871094;letter-spacing:0.347px;-webkit-text-stroke:0.35px;">:info</div>
<div class="t" style="left:438px;top:438.50px;line-height:36px;font-size:26px;font-family:'DejaVu Sans Mono', 'Liberation Mono', monospace;color:#000;letter-spacing:0.347px;-webkit-text-stroke:0.35px;">] = </div>
<div class="t" style="left:502px;top:438.50px;line-height:36px;font-size:26px;font-family:'DejaVu Sans Mono', 'Liberation Mono', monospace;color:#067d17;letter-spacing:0.347px;-webkit-text-stroke:0.35px;">"Please check your email to activate your account."</div>
<div class="t" style="left:10px;top:486.50px;line-height:36px;font-size:26px;font-family:'DejaVu Sans Mono', 'Liberation Mono', monospace;color:#adadad;letter-spacing:0.347px;">25</div>
<div class="t" style="left:262px;top:486.50px;line-height:36px;font-size:26px;font-family:'DejaVu Sans Mono', 'Liberation Mono', monospace;color:#00627a;font-style:italic;letter-spacing:0.347px;-webkit-text-stroke:0.35px;">redirect_to</div>
<div class="t" style="left:454px;top:486.50px;line-height:36px;font-size:26px;font-family:'DejaVu Sans Mono', 'Liberation Mono', monospace;color:#000;letter-spacing:0.347px;-webkit-text-stroke:0.35px;">root_url</div>
<div class="t" style="left:10px;top:534.50px;line-height:36px;font-size:26px;font-family:'DejaVu Sans Mono', 'Liberation Mono', monospace;color:#adadad;letter-spacing:0.347px;">26</div>
<div class="t" style="left:230px;top:534.50px;line-height:36px;font-size:26px;font-family:'DejaVu Sans Mono', 'Liberation Mono', monospace;color:#0033b3;letter-spacing:0.347px;-webkit-text-stroke:0.35px;">else</div>
<div class="t" style="left:10px;top:582.50px;line-height:36px;font-size:26px;font-family:'DejaVu Sans Mono', 'Liberation Mono', monospace;color:#adadad;letter-spacing:0.347px;">27</div>
<div class="t" style="left:262px;top:582.50px;line-height:36px;font-size:26px;font-family:'DejaVu Sans Mono', 'Liberation Mono', monospace;color:#00627a;font-style:italic;letter-spacing:0.347px;-webkit-text-stroke:0.35px;">render</div>
<div class="t" style="left:374px;top:582.50px;line-height:36px;font-size:26px;font-family:'DejaVu Sans Mono', 'Liberation Mono', monospace;color:#067d17;letter-spacing:0.347px;-webkit-text-stroke:0.35px;">'new'</div>
<div class="t" style="left:10px;top:630.50px;line-height:36px;font-size:26px;font-family:'DejaVu Sans Mono', 'Liberation Mono', monospace;color:#adadad;letter-spacing:0.347px;">28</div>
<div class="t" style="left:230px;top:630.50px;line-height:36px;font-size:26px;font-family:'DejaVu Sans Mono', 'Liberation Mono', monospace;color:#0033b3;letter-spacing:0.347px;-webkit-text-stroke:0.35px;">end</div>
<div class="t" style="left:10px;top:678.50px;line-height:36px;font-size:26px;font-family:'DejaVu Sans Mono', 'Liberation Mono', monospace;color:#adadad;letter-spacing:0.347px;">29</div>
<div class="t" style="left:198px;top:678.50px;line-height:36px;font-size:26px;font-family:'DejaVu Sans Mono', 'Liberation Mono', monospace;color:#0033b3;letter-spacing:0.347px;-webkit-text-stroke:0.35px;">end</div>
<div class="t" style="left:10px;top:726.50px;line-height:36px;font-size:26px;font-family:'DejaVu Sans Mono', 'Liberation Mono', monospace;color:#adadad;letter-spacing:0.347px;">30</div>
<div class="t" style="left:10px;top:774.50px;line-height:36px;font-size:26px;font-family:'DejaVu Sans Mono', 'Liberation Mono', monospace;color:#adadad;letter-spacing:0.347px;">31</div>
<div class="t" style="left:198px;top:774.50px;line-height:36px;font-size:26px;font-family:'DejaVu Sans Mono', 'Liberation Mono', monospace;color:#0033b3;letter-spacing:0.347px;-webkit-text-stroke:0.35px;">def</div>
<div class="t" style="left:262px;top:774.50px;line-height:36px;font-size:26px;font-family:'DejaVu Sans Mono', 'Liberation Mono', monospace;color:#0000f0;font-style:italic;letter-spacing:0.347px;-webkit-text-stroke:0.35px;">edit</div>
<div class="t" style="left:10px;top:822.50px;line-height:36px;font-size:26px;font-family:'DejaVu Sans Mono', 'Liberation Mono', monospace;color:#adadad;letter-spacing:0.347px;">32</div>
<div class="t" style="left:230px;top:822.50px;line-height:36px;font-size:26px;font-family:'DejaVu Sans Mono', 'Liberation Mono', monospace;color:#871094;letter-spacing:0.347px;-webkit-text-stroke:0.35px;">@user</div>
<div class="t" style="left:326px;top:822.50px;line-height:36px;font-size:26px;font-family:'DejaVu Sans Mono', 'Liberation Mono', monospace;color:#000;letter-spacing:0.347px;-webkit-text-stroke:0.35px;">=</div>
<div class="t" style="left:358px;top:822.50px;line-height:36px;font-size:26px;font-family:'DejaVu Sans Mono', 'Liberation Mono', monospace;color:#871094;font-style:italic;letter-spacing:0.347px;-webkit-text-stroke:0.35px;">User</div>
<div class="t" style="left:422px;top:822.50px;line-height:36px;font-size:26px;font-family:'DejaVu Sans Mono', 'Liberation Mono', monospace;color:#000;letter-spacing:0.347px;-webkit-text-stroke:0.35px;">.find(params[</div>
<div class="t" style="left:630px;top:822.50px;line-height:36px;font-size:26px;font-family:'DejaVu Sans Mono', 'Liberation Mono', monospace;color:#871094;letter-spacing:0.347px;-webkit-text-stroke:0.35px;">:id</div>
<div class="t" style="left:678px;top:822.50px;line-height:36px;font-size:26px;font-family:'DejaVu Sans Mono', 'Liberation Mono', monospace;color:#000;letter-spacing:0.347px;-webkit-text-stroke:0.35px;">])</div>
<div class="t" style="left:10px;top:870.50px;line-height:36px;font-size:26px;font-family:'DejaVu Sans Mono', 'Liberation Mono', monospace;color:#adadad;letter-spacing:0.347px;">33</div>
<div class="t" style="left:198px;top:870.50px;line-height:36px;font-size:26px;font-family:'DejaVu Sans Mono', 'Liberation Mono', monospace;color:#0033b3;letter-spacing:0.347px;-webkit-text-stroke:0.35px;">end</div>
<div class="t" style="left:10px;top:918.50px;line-height:36px;font-size:26px;font-family:'DejaVu Sans Mono', 'Liberation Mono', monospace;color:#adadad;letter-spacing:0.347px;">34</div>
<div class="t" style="left:10px;top:966.50px;line-height:36px;font-size:26px;font-family:'DejaVu Sans Mono', 'Liberation Mono', monospace;color:#adadad;letter-spacing:0.347px;">35</div>
<div class="t" style="left:198px;top:966.50px;line-height:36px;font-size:26px;font-family:'DejaVu Sans Mono', 'Liberation Mono', monospace;color:#0033b3;letter-spacing:0.347px;-webkit-text-stroke:0.35px;">def</div>
<div class="t" style="left:262px;top:966.50px;line-height:36px;font-size:26px;font-family:'DejaVu Sans Mono', 'Liberation Mono', monospace;color:#0000f0;font-style:italic;letter-spacing:0.347px;-webkit-text-stroke:0.35px;">update</div>
<div class="t" style="left:10px;top:1014.50px;line-height:36px;font-size:26px;font-family:'DejaVu Sans Mono', 'Liberation Mono', monospace;color:#adadad;letter-spacing:0.347px;">36</div>
<div class="t" style="left:230px;top:1014.50px;line-height:36px;font-size:26px;font-family:'DejaVu Sans Mono', 'Liberation Mono', monospace;color:#871094;letter-spacing:0.347px;-webkit-text-stroke:0.35px;">@user</div>
<div class="t" style="left:326px;top:1014.50px;line-height:36px;font-size:26px;font-family:'DejaVu Sans Mono', 'Liberation Mono', monospace;color:#000;letter-spacing:0.347px;-webkit-text-stroke:0.35px;">=</div>
<div class="t" style="left:358px;top:1014.50px;line-height:36px;font-size:26px;font-family:'DejaVu Sans Mono', 'Liberation Mono', monospace;color:#871094;font-style:italic;letter-spacing:0.347px;-webkit-text-stroke:0.35px;">User</div>
<div class="t" style="left:422px;top:1014.50px;line-height:36px;font-size:26px;font-family:'DejaVu Sans Mono', 'Liberation Mono', monospace;color:#000;letter-spacing:0.347px;-webkit-text-stroke:0.35px;">.find(params[</div>
<div class="t" style="left:630px;top:1014.50px;line-height:36px;font-size:26px;font-family:'DejaVu Sans Mono', 'Liberation Mono', monospace;color:#871094;letter-spacing:0.347px;-webkit-text-stroke:0.35px;">:id</div>
<div class="t" style="left:678px;top:1014.50px;line-height:36px;font-size:26px;font-family:'DejaVu Sans Mono', 'Liberation Mono', monospace;color:#000;letter-spacing:0.347px;-webkit-text-stroke:0.35px;">])</div>
<svg style="left:55px;top:56px;" width="32" height="32" viewBox="0 0 32 32"><path d="M9,5 H16 V25 H1 V12.600 H9Z" fill="#6e6e6e"/><path d="M1.2,9.800 L6,5.200 V9.800Z" fill="#6e6e6e"/><path d="M24.7,0.2 V24" stroke="#6e6e6e" stroke-width="2.8"/><path d="M18.6,22.400 H30.800 L24.700,29.900Z" fill="#6e6e6e"/></svg>
<svg style="left:55px;top:248px;" width="32" height="32" viewBox="0 0 32 32"><path d="M9,5 H16 V25 H1 V12.600 H9Z" fill="#6e6e6e"/><path d="M1.2,9.800 L6,5.200 V9.800Z" fill="#6e6e6e"/><path d="M24.7,0.2 V24" stroke="#6e6e6e" stroke-width="2.8"/><path d="M18.6,22.400 H30.800 L24.700,29.900Z" fill="#6e6e6e"/></svg>
<svg style="left:55px;top:776px;" width="32" height="32" viewBox="0 0 32 32"><path d="M9,5 H16 V25 H1 V12.600 H9Z" fill="#6e6e6e"/><path d="M1.2,9.800 L6,5.200 V9.800Z" fill="#6e6e6e"/><path d="M24.7,0.2 V24" stroke="#6e6e6e" stroke-width="2.8"/><path d="M18.6,22.400 H30.800 L24.700,29.900Z" fill="#6e6e6e"/></svg>
<svg style="left:55px;top:968px;" width="32" height="32" viewBox="0 0 32 32"><path d="M9,5 H16 V25 H1 V12.600 H9Z" fill="#6e6e6e"/><path d="M1.2,9.800 L6,5.200 V9.800Z" fill="#6e6e6e"/><path d="M24.7,0.2 V24" stroke="#6e6e6e" stroke-width="2.8"/><path d="M18.6,22.400 H30.800 L24.700,29.900Z" fill="#6e6e6e"/></svg>
<div style="left:93px;top:249px;width:28px;height:28px;border-radius:50%;background:#db5860;"></div>
<div style="left:93px;top:441px;width:28px;height:28px;border-radius:50%;background:#db5860;"></div>
<svg style="left:143px;top:63px;" width="20" height="27" viewBox="0 0 20 27"><path d="M1.1,1.1 H18.9 V16.4 L10,24.3 L1.1,16.4Z" fill="#fff" stroke="#cecece" stroke-width="1.9"/><path d="M5.1,10 H14.9" stroke="#cbcbcb" stroke-width="1.9"/></svg>
<svg style="left:143px;top:153px;" width="20" height="27" viewBox="0 0 20 27"><path d="M1.1,25 H18.9 V10 L10,1.9 L1.1,10Z" fill="#fff" stroke="#cecece" stroke-width="1.9"/><path d="M5.1,16 H14.9" stroke="#cbcbcb" stroke-width="1.9"/></svg>
<svg style="left:143px;top:255px;" width="20" height="27" viewBox="0 0 20 27"><path d="M1.1,1.1 H18.9 V16.4 L10,24.3 L1.1,16.4Z" fill="#fff" stroke="#cecece" stroke-width="1.9"/><path d="M5.1,10 H14.9" stroke="#cbcbcb" stroke-width="1.9"/></svg>
<svg style="left:143px;top:351px;" width="20" height="27" viewBox="0 0 20 27"><path d="M1.1,1.1 H18.9 V16.4 L10,24.3 L1.1,16.4Z" fill="#fff" stroke="#cecece" stroke-width="1.9"/><path d="M5.1,10 H14.9" stroke="#cbcbcb" stroke-width="1.9"/></svg>
<svg style="left:143px;top:633px;" width="20" height="27" viewBox="0 0 20 27"><path d="M1.1,25 H18.9 V10 L10,1.9 L1.1,10Z" fill="#fff" stroke="#cecece" stroke-width="1.9"/><path d="M5.1,16 H14.9" stroke="#cbcbcb" stroke-width="1.9"/></svg>
<svg style="left:143px;top:681px;" width="20" height="27" viewBox="0 0 20 27"><path d="M1.1,25 H18.9 V10 L10,1.9 L1.1,10Z" fill="#fff" stroke="#cecece" stroke-width="1.9"/><path d="M5.1,16 H14.9" stroke="#cbcbcb" stroke-width="1.9"/></svg>
<svg style="left:143px;top:783px;" width="20" height="27" viewBox="0 0 20 27"><path d="M1.1,1.1 H18.9 V16.4 L10,24.3 L1.1,16.4Z" fill="#fff" stroke="#cecece" stroke-width="1.9"/><path d="M5.1,10 H14.9" stroke="#cbcbcb" stroke-width="1.9"/></svg>
<svg style="left:143px;top:873px;" width="20" height="27" viewBox="0 0 20 27"><path d="M1.1,25 H18.9 V10 L10,1.9 L1.1,10Z" fill="#fff" stroke="#cecece" stroke-width="1.9"/><path d="M5.1,16 H14.9" stroke="#cbcbcb" stroke-width="1.9"/></svg>
<svg style="left:143px;top:975px;" width="20" height="27" viewBox="0 0 20 27"><path d="M1.1,1.1 H18.9 V16.4 L10,24.3 L1.1,16.4Z" fill="#fff" stroke="#cecece" stroke-width="1.9"/><path d="M5.1,10 H14.9" stroke="#cbcbcb" stroke-width="1.9"/></svg>
<div style="left:2404px;top:255px;width:28px;height:5px;background:#f9c5c5;"></div>
<div style="left:2404px;top:299px;width:28px;height:5px;background:#f9c5c5;"></div>
<div style="left:2404px;top:525px;width:28px;height:5px;background:#f9c5c5;"></div>
<div style="left:2404px;top:547px;width:28px;height:5px;background:#f9c5c5;"></div>
<div style="left:2412px;top:208px;width:14px;height:221px;border-radius:7px;background:rgba(0,0,0,0.21);"></div>
<svg style="left:2394px;top:15px;" width="24" height="20" viewBox="0 0 24 20"><path d="M1.5,9.5 L8.4,16.4 L22.6,2.4" fill="none" stroke="#59a869" stroke-width="4.4"/></svg>
</div>
<div class="t" style="left:56px;top:1204.70px;line-height:34px;font-size:24px;font-family:'DejaVu Sans', 'Liberation Sans', sans-serif;color:#000;-webkit-text-stroke:0.3px;letter-spacing:0.08px;">Debug:</div>
<svg style="left:184px;top:1205px;" width="30" height="29" viewBox="0 0 30 29"><g fill="#f4905e"><path d="M3,28.1 C3.4,22 5.4,17.5 10.2,9.2 C13,5.6 17,3.9 21.9,3.7 C25,3.8 27.5,6 28.8,8.7 V10.6 C27,10 24.5,10.3 22.6,11.3 C20.5,12.8 18.5,16.5 17.4,20.9 C17,23.500 16.9,26 16.9,28.1Z"/><rect x="1.70" y="13.30" width="3.4" height="4.2" transform="rotate(30 3.4 15.4)"/><rect x="7.70" y="4.60" width="3.6" height="3.8" transform="rotate(50 9.5 6.5)"/><rect x="15.60" y="0.10" width="3.6" height="3" transform="rotate(-12 17.4 1.6)"/><rect x="23.20" y="0.40" width="3" height="3" transform="rotate(25 24.7 1.9)"/><rect x="26.00" y="11.90" width="1.8" height="1.8" transform="rotate(20 26.9 12.8)"/><rect x="22.10" y="12.50" width="2.4" height="2.4" transform="rotate(35 23.3 13.7)"/><rect x="19.30" y="16.00" width="2.4" height="3.6" transform="rotate(20 20.5 17.8)"/><rect x="18.70" y="21.90" width="2.8" height="5.6" transform="rotate(-8 20.1 24.7)"/></g></svg>
<div style="left:205.5px;top:1227px;width:9px;height:9px;border-radius:50%;background:#22d322;box-shadow:0 0 0 1.2px #6f8f5f;"></div>
<div class="t" style="left:221.5px;top:1204.70px;line-height:34px;font-size:24px;font-family:'DejaVu Sans', 'Liberation Sans', sans-serif;color:#000;-webkit-text-stroke:0.3px;letter-spacing:0.18px;">Development: sample_rails_app</div>
<svg style="left:624px;top:1212px;" width="16" height="16" viewBox="0 0 16 16"><path d="M1,1 L15,15 M15,1 L1,15" stroke="#a8b0b8" stroke-width="2"/></svg>
<div style="left:158px;top:1242px;width:504px;height:6px;border-radius:3px;background:#a1acbf;"></div>
<svg style="left:3224px;top:1206px;" width="28" height="28" viewBox="0 0 28 28"><path d="M10.71,4.98 L10.85,1.39 L17.15,1.39 L17.29,4.98 L20.16,6.64 L23.35,4.96 L26.50,10.42 L23.46,12.34 L23.46,15.66 L26.50,17.58 L23.35,23.04 L20.16,21.36 L17.29,23.02 L17.15,26.61 L10.85,26.61 L10.71,23.02 L7.84,21.36 L4.65,23.04 L1.50,17.58 L4.54,15.66 L4.54,12.34 L1.50,10.42 L4.65,4.96 L7.84,6.64Z M9.40,14.00 a4.6,4.6 0 1,0 9.2,0 a4.6,4.6 0 1,0 -9.2,0Z" fill="#6e6e6e" fill-rule="evenodd"/></svg>
<div style="left:3278px;top:1218px;width:24px;height:4px;background:#6e6e6e;"></div>
<div class="t" style="left:127.5px;top:1262.89px;line-height:31px;font-size:22px;font-family:'DejaVu Sans', 'Liberation Sans', sans-serif;color:#000;-webkit-text-stroke:0.3px;letter-spacing:0.20px;">Debugger</div>
<div class="t" style="left:289.5px;top:1262.89px;line-height:31px;font-size:22px;font-family:'DejaVu Sans', 'Liberation Sans', sans-serif;color:#000;-webkit-text-stroke:0.3px;letter-spacing:0.52px;">Console</div>
<div style="left:264px;top:1299px;width:144px;height:5px;background:#a1acbf;"></div>
<div style="left:420px;top:1264px;width:24px;height:4px;background:#bdbdbd;"></div>
<div style="left:420px;top:1272.6px;width:24px;height:5px;background:#bdbdbd;"></div>
<div style="left:420px;top:1282px;width:24px;height:4px;background:#bdbdbd;"></div>
<div style="left:464px;top:1255px;width:2px;height:39px;background:#d1d1d1;"></div>
<svg style="left:484px;top:1260px;" width="28" height="30" viewBox="0 0 28 30"><path d="M1.6,14.8 L12,4.2 L19.6,12" fill="none" stroke="#bdbdbd" stroke-width="3.6"/><path d="M13.8,17.6 H25.8 V6.5Z" fill="#bdbdbd"/><rect x="1.4" y="22.1" width="24.4" height="3.8" fill="#bdbdbd"/></svg>
<svg style="left:536px;top:1258px;" width="28" height="32" viewBox="0 0 28 32"><path d="M14,1.9 V14" stroke="#bdbdbd" stroke-width="4.6"/><path d="M5.2,11.5 H22.8 L14,21Z" fill="#bdbdbd"/><rect x="2.1" y="24.1" width="23.8" height="3.8" fill="#bdbdbd"/></svg>
<svg style="left:588px;top:1258px;" width="28" height="32" viewBox="0 0 28 32"><path d="M14,1.9 V14" stroke="#bdbdbd" stroke-width="4.6"/><path d="M5.2,11.5 H22.8 L14,21Z" fill="#bdbdbd"/><rect x="2.1" y="24.1" width="23.8" height="3.8" fill="#bdbdbd"/></svg>
<svg style="left:640px;top:1258px;" width="28" height="32" viewBox="0 0 28 32"><path d="M14,10 V21.6" stroke="#bdbdbd" stroke-width="4.6"/><path d="M5.2,12 H22.8 L14,2.8Z" fill="#bdbdbd"/><rect x="2.1" y="24.1" width="23.8" height="3.8" fill="#bdbdbd"/></svg>
<svg style="left:692px;top:1260px;" width="32" height="32" viewBox="0 0 32 32"><path d="M2,2 L15,15" stroke="#bdbdbd" stroke-width="3.2"/><path d="M17.6,5.6 V17.6 H5.6Z" fill="#bdbdbd"/><path d="M18,13 H26 M22,13 V28 M18,28 H26" stroke="#bdbdbd" stroke-width="1.8" fill="none"/></svg>
<div style="left:738px;top:1255px;width:2px;height:39px;background:#d1d1d1;"></div>
<svg style="left:760px;top:1262px;" width="24" height="24" viewBox="0 0 24 24"><path d="M0,0 H24 V24 H0Z M3,3 V7.6 H21 V3Z M3,10.6 V14 H7.4 V10.6Z M10,10.6 V14 H14.2 V10.6Z M16.8,10.6 V14 H21 V10.6Z M3,17 V21 H7.4 V17Z M10,17 V21 H14.2 V17Z M16.8,17 V21 H21 V17Z" fill="#bdbdbd" fill-rule="evenodd"/></svg>
<svg style="left:3280px;top:1264px;" width="32" height="32" viewBox="0 0 32 32"><rect x="0" y="0" width="13.4" height="9" fill="#6e6e6e"/><rect x="15.4" y="0" width="8.6" height="9" fill="#6e6e6e"/><rect x="0" y="11" width="24" height="9" fill="#6e6e6e"/><path d="M22.6,23.4 H33 L27.8,28.8Z" fill="#222"/></svg>
<svg style="left:58px;top:1261px;" width="28" height="28" viewBox="0 0 28 28"><rect x="2" y="2.4" width="5.4" height="23.2" fill="#c4c4c4"/><path d="M11.4,2 L26,14 L11.4,26Z" fill="#c4c4c4"/></svg>
<div style="left:64px;top:1316px;width:6px;height:22px;background:#6e6e6e;"></div>
<div style="left:74px;top:1316px;width:6px;height:22px;background:#6e6e6e;"></div>
<div style="left:62px;top:1370px;width:20px;height:20px;background:#db5860;"></div>
<div style="left:52px;top:1412px;width:40px;height:2px;background:#d1d1d1;"></div>
<svg style="left:56px;top:1430px;" width="32" height="30" viewBox="0 0 32 30"><circle cx="21.6" cy="9.6" r="8.6" fill="#db5860"/><circle cx="11.4" cy="18.6" r="10.4" fill="#f2f2f2"/><circle cx="11.4" cy="18.6" r="8.6" fill="#db5860"/></svg>
<svg style="left:56px;top:1482px;" width="32" height="32" viewBox="0 0 32 32"><circle cx="16" cy="16" r="10" fill="#db5860"/><path d="M3,27.4 L28,5.6" stroke="#f2f2f2" stroke-width="6"/><path d="M3.4,27 L27.6,5.8" stroke="#6e6e6e" stroke-width="2.6"/></svg>
<div style="left:52px;top:1530px;width:40px;height:2px;background:#d1d1d1;"></div>
<svg style="left:57.5px;top:1549.5px;" width="40" height="34" viewBox="0 0 40 34"><path d="M11.85,5.36 L11.94,1.78 L18.06,1.78 L18.15,5.36 L20.91,6.95 L24.06,5.24 L27.11,10.53 L24.06,12.41 L24.06,15.59 L27.11,17.47 L24.06,22.76 L20.91,21.05 L18.15,22.64 L18.06,26.22 L11.94,26.22 L11.85,22.64 L9.09,21.05 L5.94,22.76 L2.89,17.47 L5.94,15.59 L5.94,12.41 L2.89,10.53 L5.94,5.24 L9.09,6.95Z M10.60,14.00 a4.4,4.4 0 1,0 8.8,0 a4.4,4.4 0 1,0 -8.8,0Z" fill="#6e6e6e" fill-rule="evenodd"/><path d="M21.6,25.4 H32 L26.8,30.8Z" fill="#222"/></svg>
<div style="left:52px;top:1596px;width:40px;height:2px;background:#d1d1d1;"></div>
<svg style="left:56px;top:1614px;" width="32" height="32" viewBox="0 0 32 32"><path d="M19.6,1.6 L30.4,12.4 L27.4,13.4 L21.6,19.2 L21.2,25.6 L6.4,10.8 L12.8,10.4 L18.6,4.6Z" fill="#6e6e6e"/><path d="M12.6,19.4 L1.4,30.6" stroke="#6e6e6e" stroke-width="2.4"/></svg>
<svg style="left:117px;top:1320px;" width="26" height="28" viewBox="0 0 26 28"><path d="M13,3.4 V27" stroke="#6e6e6e" stroke-width="3.7"/><path d="M3.4,13.4 L13,3.6 L22.6,13.4" fill="none" stroke="#6e6e6e" stroke-width="3.7"/></svg>
<svg style="left:117px;top:1372px;" width="26" height="28" viewBox="0 0 26 28"><path d="M13,1 V24.600" stroke="#6e6e6e" stroke-width="3.7"/><path d="M3.4,14.6 L13,24.400 L22.6,14.6" fill="none" stroke="#6e6e6e" stroke-width="3.7"/></svg>
<svg style="left:117px;top:1424px;" width="28" height="26" viewBox="0 0 28 26"><rect x="1" y="4.6" width="10" height="3" fill="#6e6e6e"/><rect x="1" y="11.6" width="10" height="3" fill="#6e6e6e"/><rect x="1" y="21" width="24" height="3.2" fill="#6e6e6e"/><path d="M19.4,0 V12" stroke="#6e6e6e" stroke-width="3"/><path d="M13,9.6 H25.8 L19.4,17Z" fill="#6e6e6e"/></svg>
<svg style="left:116px;top:1477px;" width="28" height="28" viewBox="0 0 28 28"><rect x="6.6" y="0.6" width="15" height="4.4" fill="#c9c9c9"/><path d="M0.6,7.4 H27.6 V19 H22 V13.6 H6.4 V19 H0.6Z" fill="#c9c9c9"/><rect x="8" y="15.6" width="12.4" height="10.6" fill="none" stroke="#c9c9c9" stroke-width="2"/><circle cx="24" cy="10.6" r="1.2" fill="#fff"/></svg>
<svg style="left:118px;top:1528px;" width="24" height="28" viewBox="0 0 24 28"><path d="M8,0.6 H16 V2.6 H23 V6 H1 V2.6 H8Z" fill="#6e6e6e"/><path d="M3,8.4 H21 V24 a3,3 0 0 1 -3,3 H6 a3,3 0 0 1 -3,-3Z" fill="#6e6e6e"/></svg>
<div style="left:108px;top:1572px;width:44px;height:44px;border-radius:7px;background:#cfcfcf;"></div>
<svg style="left:118px;top:1584px;" width="24" height="20" viewBox="0 0 24 20"><rect width="24" height="20" fill="#6e6e6e"/><path d="M7.4,5 L12.6,10 L7.4,15" fill="none" stroke="#cfcfcf" stroke-width="2.6"/></svg>
<div class="t" style="left:170px;top:1310.50px;line-height:36px;font-size:26px;font-family:'DejaVu Sans Mono', 'Liberation Mono', monospace;color:#000;letter-spacing:0.347px;-webkit-text-stroke:0.35px;">=&gt; Booting Puma</div>
<div class="t" style="left:170px;top:1358.50px;line-height:36px;font-size:26px;font-family:'DejaVu Sans Mono', 'Liberation Mono', monospace;color:#000;letter-spacing:0.347px;-webkit-text-stroke:0.35px;">=&gt; Rails 6.1.4.6 application starting in development</div>
<div class="t" style="left:170px;top:1406.50px;line-height:36px;font-size:26px;font-family:'DejaVu Sans Mono', 'Liberation Mono', monospace;color:#000;letter-spacing:0.347px;-webkit-text-stroke:0.35px;">=&gt; Run `bin/rails server --help` for more startup options</div>
<div class="t" style="left:170px;top:1454.50px;line-height:36px;font-size:26px;font-family:'DejaVu Sans Mono', 'Liberation Mono', monospace;color:#000;letter-spacing:0.347px;-webkit-text-stroke:0.35px;">Puma starting in single mode...</div>
<div class="t" style="left:170px;top:1502.50px;line-height:36px;font-size:26px;font-family:'DejaVu Sans Mono', 'Liberation Mono', monospace;color:#000;letter-spacing:0.347px;-webkit-text-stroke:0.35px;">* Puma version: 5.3.1 (ruby 2.7.5-p203) ("Sweetnighter")</div>
<div class="t" style="left:170px;top:1550.50px;line-height:36px;font-size:26px;font-family:'DejaVu Sans Mono', 'Liberation Mono', monospace;color:#000;letter-spacing:0.347px;-webkit-text-stroke:0.35px;">*  Min threads: 5</div>
<div class="t" style="left:170px;top:1598.50px;line-height:36px;font-size:26px;font-family:'DejaVu Sans Mono', 'Liberation Mono', monospace;color:#000;letter-spacing:0.347px;-webkit-text-stroke:0.35px;">*  Max threads: 5</div>
<div class="t" style="left:170px;top:1646.50px;line-height:36px;font-size:26px;font-family:'DejaVu Sans Mono', 'Liberation Mono', monospace;color:#000;letter-spacing:0.347px;-webkit-text-stroke:0.35px;">*  Environment: development</div>
<div class="t" style="left:160.5px;top:1694.50px;line-height:36px;font-size:26px;font-family:'DejaVu Sans Mono', 'Liberation Mono', monospace;color:#067d17;letter-spacing:0.347px;-webkit-text-stroke:0.35px;">0&gt;</div>
<svg style="left:3326px;top:136px;" width="26" height="28" viewBox="0 0 26 28"><path d="M13,1.6 c5.4,0 8.6,4 8.6,9.4 v5.4 l3,4.6 H1.4 l3,-4.6 V11 c0,-5.4 3.2,-9.4 8.6,-9.4Z" fill="#6e6e6e"/><path d="M9.6,22.8 H16.4 a3.4,3.4 0 0 1 -6.8,0Z" fill="#6e6e6e"/></svg>
<div class="t" style="left:3336px;top:170.5px;transform-origin:0 0;transform:rotate(90deg) translate(0,-50%);font-size:22px;line-height:28px;font-family:'DejaVu Sans', 'Liberation Sans', sans-serif;color:#000;letter-spacing:0.10px;">Notifications</div>
<div class="t" style="left:3336px;top:1645px;transform-origin:0 0;transform:rotate(90deg) translate(0,-50%);font-size:22px;line-height:28px;font-family:'DejaVu Sans', 'Liberation Sans', sans-serif;color:#000;letter-spacing:0.35px;">Code With Me</div>
<div style="left:42px;top:1824px;width:148px;height:42px;background:#bdbdbd;"></div>
<svg style="left:63.5px;top:1834px;" width="28" height="28" viewBox="0 0 28 28"><g fill="#6e6e6e"><path d="M6,9 a6,6 0 0 1 12,0 v9 a6,6 0 0 1 -12,0Z"/><rect x="1.6" y="9.2" width="20.8" height="2.6"/><rect x="1.6" y="14.2" width="20.8" height="2.6"/><rect x="1.6" y="19.2" width="20.8" height="2.6"/><path d="M6.8,1.4 L10.6,6 L9,7.2 L5.2,2.6Z"/><path d="M17.2,1.4 L13.4,6 L15,7.2 L18.8,2.6Z"/></g><circle cx="22" cy="22" r="6" fill="#bdbdbd"/><circle cx="22" cy="22" r="4.6" fill="#3dc545"/></svg>
<div class="t" style="left:96.5px;top:1832.89px;line-height:31px;font-size:22px;font-family:'DejaVu Sans', 'Liberation Sans', sans-serif;color:#000;-webkit-text-stroke:0.3px;letter-spacing:0.13px;">Debug</div>
<svg style="left:214px;top:1836px;" width="24" height="20" viewBox="0 0 24 20"><rect width="23" height="19" fill="#6e6e6e"/><path d="M4.4,4.6 L9.4,9.4 L4.4,14.2" fill="none" stroke="#f2f2f2" stroke-width="2.2"/><path d="M11.4,14.4 H18.6" stroke="#f2f2f2" stroke-width="2.2"/></svg>
<div class="t" style="left:246px;top:1832.89px;line-height:31px;font-size:22px;font-family:'DejaVu Sans', 'Liberation Sans', sans-serif;color:#000;-webkit-text-stroke:0.3px;letter-spacing:0.50px;">Terminal</div>
<svg style="left:384px;top:1834px;" width="26" height="24" viewBox="0 0 26 24"><path d="M7,0.6 H19 L25.4,12 L19,23.4 H7 L0.6,12Z" fill="#6e6e6e"/><path d="M9.6,6 L18.6,12 L9.6,18Z" fill="#f2f2f2"/></svg>
<div class="t" style="left:418px;top:1832.89px;line-height:31px;font-size:22px;font-family:'DejaVu Sans', 'Liberation Sans', sans-serif;color:#000;-webkit-text-stroke:0.3px;letter-spacing:0.34px;">Services</div>
<svg style="left:558px;top:1834px;" width="22" height="22" viewBox="0 0 22 22"><circle cx="11" cy="11" r="10.6" fill="#6e6e6e"/><rect x="9.4" y="4.6" width="3.2" height="8" fill="#f2f2f2"/><rect x="9.4" y="14.6" width="3.2" height="3.2" fill="#f2f2f2"/></svg>
<div class="t" style="left:590px;top:1832.89px;line-height:31px;font-size:22px;font-family:'DejaVu Sans', 'Liberation Sans', sans-serif;color:#000;-webkit-text-stroke:0.3px;letter-spacing:0.32px;">Problems</div>
<svg style="left:11px;top:1875px;" width="26" height="26" viewBox="0 0 26 26"><rect x="5.4" y="1" width="19.2" height="19.2" fill="none" stroke="#6e6e6e" stroke-width="1.8"/><path d="M1,5.6 V24.6 H20" fill="none" stroke="#6e6e6e" stroke-width="1.8"/></svg>
<div class="t" style="left:3068px;top:1872.89px;line-height:31px;font-size:22px;font-family:'DejaVu Sans', 'Liberation Sans', sans-serif;color:#000;-webkit-text-stroke:0.3px;letter-spacing:0.18px;">idle...</div>
<div class="t" style="left:3168.5px;top:1872.89px;line-height:31px;font-size:22px;font-family:'DejaVu Sans', 'Liberation Sans', sans-serif;color:#000;-webkit-text-stroke:0.3px;letter-spacing:0.43px;">Ping (UI): 8 (8)</div>
<div style="left:2502px;top:108px;width:534px;height:342px;background:#fff;box-shadow:0 0 0 1px rgba(0,0,0,0.15), 0 12px 34px 2px rgba(0,0,0,0.2), 0 2px 6px rgba(0,0,0,0.1);"></div>
<div style="left:2502px;top:108px;width:534px;height:62px;background:#e6e6e6;"></div>
<div class="t" style="left:2545.5px;top:123.35px;line-height:35px;font-size:25px;font-family:'DejaVu Sans', 'Liberation Sans', sans-serif;color:#000;font-weight:700;letter-spacing:-0.29px;">Code With Me</div>
<div style="left:2843px;top:133px;width:10px;height:10px;border-radius:50%;background:#59a869;"></div>
<div class="t" style="left:2868px;top:122.50px;line-height:36px;font-size:26px;font-family:'DejaVu Sans', 'Liberation Sans', sans-serif;color:#808080;-webkit-text-stroke:0.3px;letter-spacing:-0.15px;">Online</div>
<div style="left:3004.6px;top:127.8px;width:6.4px;height:6.4px;border-radius:50%;background:#6e6e6e;"></div>
<div style="left:3004.6px;top:136.8px;width:6.4px;height:6.4px;border-radius:50%;background:#6e6e6e;"></div>
<div style="left:3004.6px;top:145.60000000000002px;width:6.4px;height:6.4px;border-radius:50%;background:#6e6e6e;"></div>
<svg style="left:2531px;top:187px;" width="22" height="22" viewBox="0 0 22 22"><path d="M1.6,1.6 L20.4,20.4 M20.4,1.6 L1.6,20.4" stroke="#db5860" stroke-width="4"/></svg>
<div class="t" style="left:2570px;top:182.50px;line-height:36px;font-size:26px;font-family:'DejaVu Sans', 'Liberation Sans', sans-serif;color:#000;-webkit-text-stroke:0.3px;letter-spacing:0.01px;">Leave Session</div>
<div style="left:2502px;top:218px;width:534px;height:40px;background:#2675bf;"></div>
<svg style="left:2529px;top:224px;" width="26" height="28" viewBox="0 0 26 28"><path d="M1,2.2 H7.8 V7.4 L5.8,8.6 C7,13.600 11.600,18.400 16.600,19.800 L18,17.800 H24.700 V25.900 H18.500 C9.500,25.900 1,18 1,8.400Z" fill="#b0b0b0"/><path d="M14.6,3.4 L24.6,13.4 M24.6,3.4 L14.6,13.4" stroke="#dd5f70" stroke-width="2.6"/></svg>
<div class="t" style="left:2570px;top:222.50px;line-height:36px;font-size:26px;font-family:'DejaVu Sans', 'Liberation Sans', sans-serif;color:#fff;-webkit-text-stroke:0.3px;letter-spacing:-0.11px;">Leave Call</div>
<div style="left:2508px;top:270px;width:522px;height:2px;background:#d6d6d6;"></div>
<div class="t" style="left:2525.5px;top:281.35px;line-height:35px;font-size:25px;font-family:'DejaVu Sans', 'Liberation Sans', sans-serif;color:#999;font-weight:700;letter-spacing:-0.40px;">In Session: 2</div>
<svg style="left:2529px;top:329px;" width="26" height="26" viewBox="0 0 26 26"><rect x="1" y="0" width="5.2" height="18" fill="#6e6e6e"/><path d="M1,18 H6.2 L1,23.4Z" fill="#6e6e6e"/><rect x="1.6" y="23.2" width="8" height="1.8" fill="#6e6e6e"/><path d="M15.4,6.4 L10.6,11.2 L15.4,16 M23.4,6.4 L18.6,11.2 L23.4,16" fill="none" stroke="#eda200" stroke-width="2.4"/></svg>
<div class="t" style="left:2570px;top:326.30px;line-height:36px;font-size:26px;font-family:'DejaVu Sans', 'Liberation Sans', sans-serif;color:#000;-webkit-text-stroke:0.3px;letter-spacing:0.17px;">Make Everyone Follow You</div>
<svg style="left:2928px;top:333px;" width="72" height="24" viewBox="0 0 72 24"><path d="M1.6,11 L10.6,2.4 L19.6,11" fill="none" stroke="#999" stroke-width="2.4"/><path d="M36,2 L47.4,12.6 H41.6 V20.6 H30.4 V12.6 H24.6Z" fill="none" stroke="#999" stroke-width="2.2"/></svg>
<div class="t" style="left:2975.5px;top:326.30px;line-height:36px;font-size:26px;font-family:'DejaVu Sans', 'Liberation Sans', sans-serif;color:#999;-webkit-text-stroke:0.3px;">O</div>
<div style="left:2526px;top:366px;width:32px;height:32px;border-radius:50%;background:#cbb8ec;"></div>
<div class="t" style="left:2536.2px;top:367.38px;line-height:31px;font-size:22px;font-family:'Liberation Sans', sans-serif;color:#111;">J</div>
<div class="t" style="left:2570px;top:366.30px;line-height:36px;font-size:26px;font-family:'DejaVu Sans', 'Liberation Sans', sans-serif;color:#000;-webkit-text-stroke:0.3px;letter-spacing:0.60px;">JetBrains</div>
<div class="t" style="left:2698.5px;top:366.30px;line-height:36px;font-size:26px;font-family:'DejaVu Sans', 'Liberation Sans', sans-serif;color:#808080;-webkit-text-stroke:0.3px;letter-spacing:1.72px;">You</div>
<div style="left:2526px;top:406px;width:32px;height:32px;border-radius:50%;background:#8bc47e;"></div>
<div class="t" style="left:2534.6px;top:407.38px;line-height:31px;font-size:22px;font-family:'Liberation Sans', sans-serif;color:#111;">A</div>
<div class="t" style="left:2570px;top:406.50px;line-height:36px;font-size:26px;font-family:'DejaVu Sans', 'Liberation Sans', sans-serif;color:#000;-webkit-text-stroke:0.3px;letter-spacing:-0.42px;">Anna</div>
<div class="t" style="left:2643px;top:406.50px;line-height:36px;font-size:26px;font-family:'DejaVu Sans', 'Liberation Sans', sans-serif;color:#808080;-webkit-text-stroke:0.3px;letter-spacing:0.70px;">Host</div>
<svg style="left:2996px;top:412px;" width="14" height="20" viewBox="0 0 14 20"><path d="M2,2 L10.4,9.8 L2,17.6" fill="none" stroke="#808080" stroke-width="2.4"/></svg>
<svg style="left:2769px;top:240.5px;" width="34" height="38" viewBox="0 0 34 38"><path d="M10.4,3.4 c1.6,-1 3.6,-0.2 4.2,1.6 l3,9.4 l1.2,-0.4 c1.4,-0.4 2.6,0.2 3.2,1.4 c1.2,-0.8 3,-0.4 3.8,1 c1.4,-0.8 3.2,-0.2 3.8,1.4 l2,5.6 c1.2,3.6 0,7.2 -3.2,8.8 l-5.6,2.8 c-2.8,1.4 -6,0.8 -8,-1.4 l-8.6,-9.4 c-1,-1.2 -0.8,-2.8 0.4,-3.8 c1.2,-1 2.8,-0.8 3.8,0.2 l2,2 L8.4,7.4 C8,5.800 8.800,4.200 10.400,3.400Z" fill="#fff" stroke="#000" stroke-width="2" stroke-linejoin="round"/><path d="M19,23.6 l2,6 M22.6,22.6 l2,6 M26.200,21.600 l2,6" stroke="#000" stroke-width="1.6"/></svg>
</body></html>
